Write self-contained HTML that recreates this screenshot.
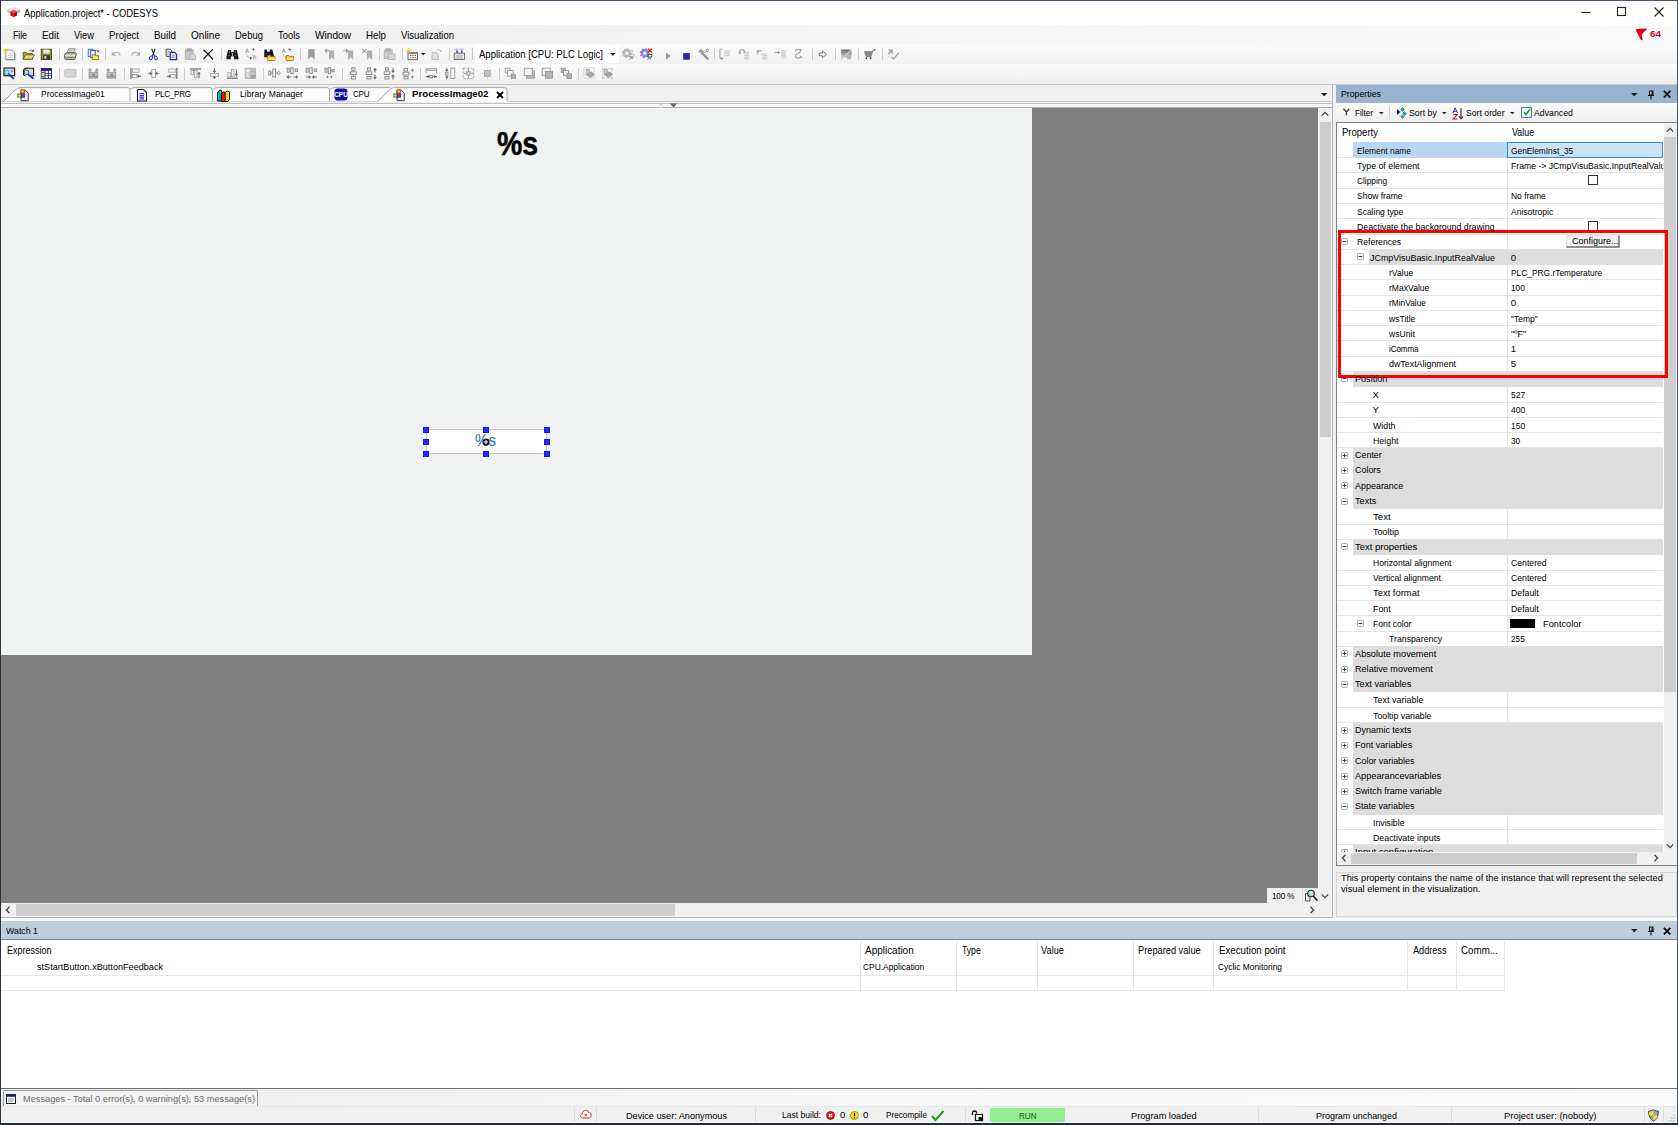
<!DOCTYPE html>
<html><head><meta charset="utf-8"><title>Application.project* - CODESYS</title>
<style>
html,body{margin:0;padding:0}
body{width:1678px;height:1125px;overflow:hidden;position:relative;background:#f0f0f0;font-family:"Liberation Sans",sans-serif;font-size:9.2px;color:#000}
div,span,svg{position:absolute;box-sizing:border-box}
.t{white-space:pre;display:block}
svg{overflow:visible}
</style></head><body>
<div style="left:0px;top:0px;width:1678px;height:25px;background:#ffffff;"></div>
<div style="left:0px;top:25px;width:1678px;height:19px;background:linear-gradient(to right,#efefef 0%,#f0f0f0 25%,#f7f7f7 60%,#fafafa 100%);"></div>
<div style="left:1px;top:44px;width:1677px;height:20px;background:linear-gradient(#fbfbfb,#f1f1f1);"></div>
<div style="left:1px;top:64px;width:1677px;height:20px;background:linear-gradient(#fcfcfc,#efefef);"></div>
<div style="left:1px;top:84px;width:1677px;height:1px;background:#c6c6c6;"></div>
<div style="left:1px;top:85px;width:1333px;height:17px;background:#f0f0f0;"></div>
<div style="left:1px;top:101px;width:1332px;height:1px;background:#c8c8c8;"></div>
<div style="left:1px;top:102px;width:1332px;height:1px;background:#efefef;"></div>
<div style="left:1px;top:103px;width:1332px;height:1px;background:#c0c0c0;"></div>
<div style="left:1px;top:104px;width:1330px;height:3px;background:#f9f9f9;"></div>
<div style="left:1px;top:107px;width:1332px;height:1px;background:#b0b0b0;"></div>
<div style="left:1px;top:108px;width:1317px;height:795px;background:#808080;"></div>
<div style="left:1px;top:108px;width:1031px;height:547px;background:#f0f1f1;"></div>
<div style="left:475px;top:45px;width:144px;height:18px;background:#ffffff;"></div>
<span class="t" style="left:496.6px;top:122.3px;font-size:33.5px;line-height:44px;font-weight:700;-webkit-text-stroke:0.5px #000;transform-origin:0 0;transform:scaleX(0.85)">%s</span>
<div style="left:426px;top:428.9px;width:121px;height:25.3px;background:#ffffff;border:1px solid #c4c4c4;"></div>
<span class="t" style="left:474.6px;top:430.6px;font-size:16.6px;line-height:20px;color:#1f6fb8;transform-origin:0 0;transform:scaleX(0.92)">%s</span>
<div style="left:422.8px;top:426.5px;width:6.4px;height:6.4px;background:#2a2aff;border:1px solid #1414e6;"></div>
<div style="left:422.8px;top:438.7px;width:6.4px;height:6.4px;background:#2a2aff;border:1px solid #1414e6;"></div>
<div style="left:422.8px;top:450.6px;width:6.4px;height:6.4px;background:#2a2aff;border:1px solid #1414e6;"></div>
<div style="left:483.1px;top:426.5px;width:6.4px;height:6.4px;background:#2a2aff;border:1px solid #1414e6;"></div>
<div style="left:483.1px;top:450.6px;width:6.4px;height:6.4px;background:#2a2aff;border:1px solid #1414e6;"></div>
<div style="left:543.5999999999999px;top:426.5px;width:6.4px;height:6.4px;background:#2a2aff;border:1px solid #1414e6;"></div>
<div style="left:543.5999999999999px;top:438.7px;width:6.4px;height:6.4px;background:#2a2aff;border:1px solid #1414e6;"></div>
<div style="left:543.5999999999999px;top:450.6px;width:6.4px;height:6.4px;background:#2a2aff;border:1px solid #1414e6;"></div>
<svg style="left:482.3px;top:437.9px" width="8" height="8" viewBox="0 0 8 8"><circle cx="4" cy="4" r="3.6" fill="#111"/><path d="M4 1.8V6.2M1.8 4H6.2" stroke="#fff" stroke-width="1.1"/></svg>
<div style="left:1318px;top:108px;width:14px;height:795px;background:#f0f0f0;"></div>
<div style="left:1320px;top:121.6px;width:11px;height:315px;background:#cdcdcd;"></div>
<div style="left:1px;top:902.7px;width:1317px;height:14px;background:#f0f0f0;"></div>
<div style="left:16px;top:904px;width:659px;height:11.5px;background:#cdcdcd;"></div>
<div style="left:1318px;top:902.7px;width:14px;height:14px;background:#f0f0f0;"></div>
<div style="left:1px;top:916.7px;width:1332px;height:1px;background:#b8b8b8;"></div>
<div style="left:1332px;top:85px;width:1px;height:832px;background:#b8b8b8;"></div>
<div style="left:1266.5px;top:887.5px;width:35.5px;height:15.2px;background:#f0f0f0;"></div>
<div style="left:1302px;top:887.5px;width:15.8px;height:15.2px;background:#f0f0f0;border-left:1px solid #dcdcdc;"></div>
<div style="left:1336px;top:85px;width:341px;height:18px;background:#99b4d1;"></div>
<div style="left:1336px;top:103px;width:341px;height:19px;background:linear-gradient(#fdfdfd,#eeeeee);"></div>
<div style="left:1389px;top:107px;width:1px;height:11.5px;background:#cfcfcf;"></div>
<div style="left:1336px;top:122px;width:341px;height:744px;background:#ffffff;border:1px solid #7f7f7f;"></div>
<div style="left:0;top:0;width:1678px;height:852px;overflow:hidden">
<div style="left:1337px;top:157.172px;width:325.79999999999995px;height:1px;background:#e4e4e4;"></div>
<div style="left:1506.5px;top:142.4px;width:1px;height:15.272px;background:#e4e4e4;"></div>
<div style="left:1353px;top:142.4px;width:154px;height:15.572000000000001px;background:#b9d7f3;"></div>
<div style="left:1507px;top:142.4px;width:155.79999999999995px;height:15.772px;background:#cbe3f8;border:1px solid #2f8be6;"></div>
<div style="left:1337px;top:172.444px;width:325.79999999999995px;height:1px;background:#e4e4e4;"></div>
<div style="left:1506.5px;top:157.672px;width:1px;height:15.272px;background:#e4e4e4;"></div>
<div style="left:1337px;top:187.716px;width:325.79999999999995px;height:1px;background:#e4e4e4;"></div>
<div style="left:1506.5px;top:172.94400000000002px;width:1px;height:15.272px;background:#e4e4e4;"></div>
<div style="left:1587.5px;top:175.394px;width:10px;height:10px;background:#fff;border:1px solid #333;"></div>
<div style="left:1337px;top:202.988px;width:325.79999999999995px;height:1px;background:#e4e4e4;"></div>
<div style="left:1506.5px;top:188.216px;width:1px;height:15.272px;background:#e4e4e4;"></div>
<div style="left:1337px;top:218.26px;width:325.79999999999995px;height:1px;background:#e4e4e4;"></div>
<div style="left:1506.5px;top:203.488px;width:1px;height:15.272px;background:#e4e4e4;"></div>
<div style="left:1337px;top:233.53199999999998px;width:325.79999999999995px;height:1px;background:#e4e4e4;"></div>
<div style="left:1506.5px;top:218.76px;width:1px;height:15.272px;background:#e4e4e4;"></div>
<div style="left:1587.5px;top:221.20999999999998px;width:10px;height:10px;background:#fff;border:1px solid #333;"></div>
<div style="left:1337px;top:248.804px;width:325.79999999999995px;height:1px;background:#e4e4e4;"></div>
<div style="left:1506.5px;top:234.032px;width:1px;height:15.272px;background:#e4e4e4;"></div>
<svg style="left:1341.10px;top:237.98px" width="7" height="7" viewBox="0 0 7 7"><rect x="0.5" y="0.5" width="6" height="6" rx="0.8" fill="#fbfbfb" stroke="#a3b4b8" stroke-width="1"/><path d="M1.7 3.5H5.3" stroke="#3a3a3a" stroke-width="1"/></svg>
<div style="left:1337px;top:264.076px;width:325.79999999999995px;height:1px;background:#e4e4e4;"></div>
<div style="left:1506.5px;top:249.304px;width:1px;height:15.272px;background:#e4e4e4;"></div>
<div style="left:1369px;top:249.704px;width:293.79999999999995px;height:15.272px;background:#dddddd;"></div>
<svg style="left:1357.00px;top:253.25px" width="7" height="7" viewBox="0 0 7 7"><rect x="0.5" y="0.5" width="6" height="6" rx="0.8" fill="#fbfbfb" stroke="#a3b4b8" stroke-width="1"/><path d="M1.7 3.5H5.3" stroke="#3a3a3a" stroke-width="1"/></svg>
<div style="left:1337px;top:279.348px;width:325.79999999999995px;height:1px;background:#e4e4e4;"></div>
<div style="left:1506.5px;top:264.576px;width:1px;height:15.272px;background:#e4e4e4;"></div>
<div style="left:1337px;top:294.62px;width:325.79999999999995px;height:1px;background:#e4e4e4;"></div>
<div style="left:1506.5px;top:279.848px;width:1px;height:15.272px;background:#e4e4e4;"></div>
<div style="left:1337px;top:309.892px;width:325.79999999999995px;height:1px;background:#e4e4e4;"></div>
<div style="left:1506.5px;top:295.12px;width:1px;height:15.272px;background:#e4e4e4;"></div>
<div style="left:1337px;top:325.164px;width:325.79999999999995px;height:1px;background:#e4e4e4;"></div>
<div style="left:1506.5px;top:310.392px;width:1px;height:15.272px;background:#e4e4e4;"></div>
<div style="left:1337px;top:340.436px;width:325.79999999999995px;height:1px;background:#e4e4e4;"></div>
<div style="left:1506.5px;top:325.664px;width:1px;height:15.272px;background:#e4e4e4;"></div>
<div style="left:1337px;top:355.708px;width:325.79999999999995px;height:1px;background:#e4e4e4;"></div>
<div style="left:1506.5px;top:340.93600000000004px;width:1px;height:15.272px;background:#e4e4e4;"></div>
<div style="left:1337px;top:370.97999999999996px;width:325.79999999999995px;height:1px;background:#e4e4e4;"></div>
<div style="left:1506.5px;top:356.20799999999997px;width:1px;height:15.272px;background:#e4e4e4;"></div>
<div style="left:1353px;top:371.48px;width:309.79999999999995px;height:15.572000000000001px;background:#dddddd;"></div>
<svg style="left:1341.20px;top:375.43px" width="7" height="7" viewBox="0 0 7 7"><rect x="0.5" y="0.5" width="6" height="6" rx="0.8" fill="#fbfbfb" stroke="#a3b4b8" stroke-width="1"/><path d="M1.7 3.5H5.3" stroke="#3a3a3a" stroke-width="1"/></svg>
<div style="left:1337px;top:401.524px;width:325.79999999999995px;height:1px;background:#e4e4e4;"></div>
<div style="left:1506.5px;top:386.752px;width:1px;height:15.272px;background:#e4e4e4;"></div>
<div style="left:1337px;top:416.796px;width:325.79999999999995px;height:1px;background:#e4e4e4;"></div>
<div style="left:1506.5px;top:402.024px;width:1px;height:15.272px;background:#e4e4e4;"></div>
<div style="left:1337px;top:432.06800000000004px;width:325.79999999999995px;height:1px;background:#e4e4e4;"></div>
<div style="left:1506.5px;top:417.29600000000005px;width:1px;height:15.272px;background:#e4e4e4;"></div>
<div style="left:1337px;top:447.34px;width:325.79999999999995px;height:1px;background:#e4e4e4;"></div>
<div style="left:1506.5px;top:432.568px;width:1px;height:15.272px;background:#e4e4e4;"></div>
<div style="left:1353px;top:447.84000000000003px;width:309.79999999999995px;height:15.572000000000001px;background:#dddddd;"></div>
<svg style="left:1341.20px;top:451.79px" width="7" height="7" viewBox="0 0 7 7"><rect x="0.5" y="0.5" width="6" height="6" rx="0.8" fill="#fbfbfb" stroke="#a3b4b8" stroke-width="1"/><path d="M1.7 3.5H5.3" stroke="#3a3a3a" stroke-width="1"/><path d="M3.5 1.7V5.3" stroke="#3a3a3a" stroke-width="1"/></svg>
<div style="left:1353px;top:463.11199999999997px;width:309.79999999999995px;height:15.572000000000001px;background:#dddddd;"></div>
<svg style="left:1341.20px;top:467.06px" width="7" height="7" viewBox="0 0 7 7"><rect x="0.5" y="0.5" width="6" height="6" rx="0.8" fill="#fbfbfb" stroke="#a3b4b8" stroke-width="1"/><path d="M1.7 3.5H5.3" stroke="#3a3a3a" stroke-width="1"/><path d="M3.5 1.7V5.3" stroke="#3a3a3a" stroke-width="1"/></svg>
<div style="left:1353px;top:478.384px;width:309.79999999999995px;height:15.572000000000001px;background:#dddddd;"></div>
<svg style="left:1341.20px;top:482.33px" width="7" height="7" viewBox="0 0 7 7"><rect x="0.5" y="0.5" width="6" height="6" rx="0.8" fill="#fbfbfb" stroke="#a3b4b8" stroke-width="1"/><path d="M1.7 3.5H5.3" stroke="#3a3a3a" stroke-width="1"/><path d="M3.5 1.7V5.3" stroke="#3a3a3a" stroke-width="1"/></svg>
<div style="left:1353px;top:493.65600000000006px;width:309.79999999999995px;height:15.572000000000001px;background:#dddddd;"></div>
<svg style="left:1341.20px;top:497.61px" width="7" height="7" viewBox="0 0 7 7"><rect x="0.5" y="0.5" width="6" height="6" rx="0.8" fill="#fbfbfb" stroke="#a3b4b8" stroke-width="1"/><path d="M1.7 3.5H5.3" stroke="#3a3a3a" stroke-width="1"/></svg>
<div style="left:1337px;top:523.7px;width:325.79999999999995px;height:1px;background:#e4e4e4;"></div>
<div style="left:1506.5px;top:508.928px;width:1px;height:15.272px;background:#e4e4e4;"></div>
<div style="left:1337px;top:538.9720000000001px;width:325.79999999999995px;height:1px;background:#e4e4e4;"></div>
<div style="left:1506.5px;top:524.2px;width:1px;height:15.272px;background:#e4e4e4;"></div>
<div style="left:1353px;top:539.472px;width:309.79999999999995px;height:15.572000000000001px;background:#dddddd;"></div>
<svg style="left:1341.20px;top:543.42px" width="7" height="7" viewBox="0 0 7 7"><rect x="0.5" y="0.5" width="6" height="6" rx="0.8" fill="#fbfbfb" stroke="#a3b4b8" stroke-width="1"/><path d="M1.7 3.5H5.3" stroke="#3a3a3a" stroke-width="1"/></svg>
<div style="left:1337px;top:569.5160000000001px;width:325.79999999999995px;height:1px;background:#e4e4e4;"></div>
<div style="left:1506.5px;top:554.744px;width:1px;height:15.272px;background:#e4e4e4;"></div>
<div style="left:1337px;top:584.788px;width:325.79999999999995px;height:1px;background:#e4e4e4;"></div>
<div style="left:1506.5px;top:570.016px;width:1px;height:15.272px;background:#e4e4e4;"></div>
<div style="left:1337px;top:600.0600000000001px;width:325.79999999999995px;height:1px;background:#e4e4e4;"></div>
<div style="left:1506.5px;top:585.288px;width:1px;height:15.272px;background:#e4e4e4;"></div>
<div style="left:1337px;top:615.3320000000001px;width:325.79999999999995px;height:1px;background:#e4e4e4;"></div>
<div style="left:1506.5px;top:600.5600000000001px;width:1px;height:15.272px;background:#e4e4e4;"></div>
<div style="left:1337px;top:630.604px;width:325.79999999999995px;height:1px;background:#e4e4e4;"></div>
<div style="left:1506.5px;top:615.832px;width:1px;height:15.272px;background:#e4e4e4;"></div>
<svg style="left:1357.00px;top:619.78px" width="7" height="7" viewBox="0 0 7 7"><rect x="0.5" y="0.5" width="6" height="6" rx="0.8" fill="#fbfbfb" stroke="#a3b4b8" stroke-width="1"/><path d="M1.7 3.5H5.3" stroke="#3a3a3a" stroke-width="1"/></svg>
<div style="left:1510px;top:619.082px;width:25px;height:9px;background:#000;"></div>
<div style="left:1337px;top:645.8760000000001px;width:325.79999999999995px;height:1px;background:#e4e4e4;"></div>
<div style="left:1506.5px;top:631.104px;width:1px;height:15.272px;background:#e4e4e4;"></div>
<div style="left:1353px;top:646.376px;width:309.79999999999995px;height:15.572000000000001px;background:#dddddd;"></div>
<svg style="left:1341.20px;top:650.33px" width="7" height="7" viewBox="0 0 7 7"><rect x="0.5" y="0.5" width="6" height="6" rx="0.8" fill="#fbfbfb" stroke="#a3b4b8" stroke-width="1"/><path d="M1.7 3.5H5.3" stroke="#3a3a3a" stroke-width="1"/><path d="M3.5 1.7V5.3" stroke="#3a3a3a" stroke-width="1"/></svg>
<div style="left:1353px;top:661.648px;width:309.79999999999995px;height:15.572000000000001px;background:#dddddd;"></div>
<svg style="left:1341.20px;top:665.60px" width="7" height="7" viewBox="0 0 7 7"><rect x="0.5" y="0.5" width="6" height="6" rx="0.8" fill="#fbfbfb" stroke="#a3b4b8" stroke-width="1"/><path d="M1.7 3.5H5.3" stroke="#3a3a3a" stroke-width="1"/><path d="M3.5 1.7V5.3" stroke="#3a3a3a" stroke-width="1"/></svg>
<div style="left:1353px;top:676.92px;width:309.79999999999995px;height:15.572000000000001px;background:#dddddd;"></div>
<svg style="left:1341.20px;top:680.87px" width="7" height="7" viewBox="0 0 7 7"><rect x="0.5" y="0.5" width="6" height="6" rx="0.8" fill="#fbfbfb" stroke="#a3b4b8" stroke-width="1"/><path d="M1.7 3.5H5.3" stroke="#3a3a3a" stroke-width="1"/></svg>
<div style="left:1337px;top:706.964px;width:325.79999999999995px;height:1px;background:#e4e4e4;"></div>
<div style="left:1506.5px;top:692.192px;width:1px;height:15.272px;background:#e4e4e4;"></div>
<div style="left:1337px;top:722.236px;width:325.79999999999995px;height:1px;background:#e4e4e4;"></div>
<div style="left:1506.5px;top:707.4639999999999px;width:1px;height:15.272px;background:#e4e4e4;"></div>
<div style="left:1353px;top:722.736px;width:309.79999999999995px;height:15.572000000000001px;background:#dddddd;"></div>
<svg style="left:1341.20px;top:726.69px" width="7" height="7" viewBox="0 0 7 7"><rect x="0.5" y="0.5" width="6" height="6" rx="0.8" fill="#fbfbfb" stroke="#a3b4b8" stroke-width="1"/><path d="M1.7 3.5H5.3" stroke="#3a3a3a" stroke-width="1"/><path d="M3.5 1.7V5.3" stroke="#3a3a3a" stroke-width="1"/></svg>
<div style="left:1353px;top:738.008px;width:309.79999999999995px;height:15.572000000000001px;background:#dddddd;"></div>
<svg style="left:1341.20px;top:741.96px" width="7" height="7" viewBox="0 0 7 7"><rect x="0.5" y="0.5" width="6" height="6" rx="0.8" fill="#fbfbfb" stroke="#a3b4b8" stroke-width="1"/><path d="M1.7 3.5H5.3" stroke="#3a3a3a" stroke-width="1"/><path d="M3.5 1.7V5.3" stroke="#3a3a3a" stroke-width="1"/></svg>
<div style="left:1353px;top:753.28px;width:309.79999999999995px;height:15.572000000000001px;background:#dddddd;"></div>
<svg style="left:1341.20px;top:757.23px" width="7" height="7" viewBox="0 0 7 7"><rect x="0.5" y="0.5" width="6" height="6" rx="0.8" fill="#fbfbfb" stroke="#a3b4b8" stroke-width="1"/><path d="M1.7 3.5H5.3" stroke="#3a3a3a" stroke-width="1"/><path d="M3.5 1.7V5.3" stroke="#3a3a3a" stroke-width="1"/></svg>
<div style="left:1353px;top:768.552px;width:309.79999999999995px;height:15.572000000000001px;background:#dddddd;"></div>
<svg style="left:1341.20px;top:772.50px" width="7" height="7" viewBox="0 0 7 7"><rect x="0.5" y="0.5" width="6" height="6" rx="0.8" fill="#fbfbfb" stroke="#a3b4b8" stroke-width="1"/><path d="M1.7 3.5H5.3" stroke="#3a3a3a" stroke-width="1"/><path d="M3.5 1.7V5.3" stroke="#3a3a3a" stroke-width="1"/></svg>
<div style="left:1353px;top:783.824px;width:309.79999999999995px;height:15.572000000000001px;background:#dddddd;"></div>
<svg style="left:1341.20px;top:787.77px" width="7" height="7" viewBox="0 0 7 7"><rect x="0.5" y="0.5" width="6" height="6" rx="0.8" fill="#fbfbfb" stroke="#a3b4b8" stroke-width="1"/><path d="M1.7 3.5H5.3" stroke="#3a3a3a" stroke-width="1"/><path d="M3.5 1.7V5.3" stroke="#3a3a3a" stroke-width="1"/></svg>
<div style="left:1353px;top:799.096px;width:309.79999999999995px;height:15.572000000000001px;background:#dddddd;"></div>
<svg style="left:1341.20px;top:803.05px" width="7" height="7" viewBox="0 0 7 7"><rect x="0.5" y="0.5" width="6" height="6" rx="0.8" fill="#fbfbfb" stroke="#a3b4b8" stroke-width="1"/><path d="M1.7 3.5H5.3" stroke="#3a3a3a" stroke-width="1"/></svg>
<div style="left:1337px;top:829.14px;width:325.79999999999995px;height:1px;background:#e4e4e4;"></div>
<div style="left:1506.5px;top:814.3679999999999px;width:1px;height:15.272px;background:#e4e4e4;"></div>
<div style="left:1337px;top:844.412px;width:325.79999999999995px;height:1px;background:#e4e4e4;"></div>
<div style="left:1506.5px;top:829.64px;width:1px;height:15.272px;background:#e4e4e4;"></div>
<div style="left:1353px;top:844.912px;width:309.79999999999995px;height:15.572000000000001px;background:#dddddd;"></div>
<svg style="left:1341.20px;top:848.86px" width="7" height="7" viewBox="0 0 7 7"><rect x="0.5" y="0.5" width="6" height="6" rx="0.8" fill="#fbfbfb" stroke="#a3b4b8" stroke-width="1"/><path d="M1.7 3.5H5.3" stroke="#3a3a3a" stroke-width="1"/><path d="M3.5 1.7V5.3" stroke="#3a3a3a" stroke-width="1"/></svg>
</div>
<div style="left:1565.8px;top:235.3px;width:53.2px;height:12px;background:#f1f1f1;border:1px solid #8c8c8c;border-left-color:#e3e3e3;border-top-color:#e3e3e3;box-shadow:0.6px 0.6px 0 #444;"></div>
<div style="left:1663.5px;top:123.3px;width:13.3px;height:728.7px;background:#f0f0f0;"></div>
<div style="left:1664px;top:137.3px;width:11.5px;height:555.2px;background:#cdcdcd;"></div>
<div style="left:1338px;top:852.2px;width:338.7px;height:12.8px;background:#f0f0f0;"></div>
<div style="left:1351.3px;top:853.2px;width:285.4px;height:11px;background:#cdcdcd;"></div>
<div style="left:1338px;top:229.8px;width:330px;height:148px;border:3.7px solid #fe0000;"></div>
<div style="left:1336px;top:872px;width:341px;height:44.7px;background:#f0f0f0;border:1px solid #d6d6d6;"></div>
<div style="left:1px;top:917.7px;width:1677px;height:4px;background:#fbfbfb;"></div>
<div style="left:1px;top:921px;width:1677px;height:18px;background:#bfcddb;"></div>
<div style="left:1px;top:938.8px;width:1677px;height:1px;background:#7a8a9c;"></div>
<div style="left:1px;top:939.8px;width:1677px;height:148px;background:#ffffff;"></div>
<div style="left:859.5px;top:941px;width:1px;height:49.5px;background:#e6e6e6;"></div>
<div style="left:955.8px;top:941px;width:1px;height:49.5px;background:#e6e6e6;"></div>
<div style="left:1036.5px;top:941px;width:1px;height:49.5px;background:#e6e6e6;"></div>
<div style="left:1132.5px;top:941px;width:1px;height:49.5px;background:#e6e6e6;"></div>
<div style="left:1213.3px;top:941px;width:1px;height:49.5px;background:#e6e6e6;"></div>
<div style="left:1407.0px;top:941px;width:1px;height:49.5px;background:#e6e6e6;"></div>
<div style="left:1455.5px;top:941px;width:1px;height:49.5px;background:#e6e6e6;"></div>
<div style="left:1503.5px;top:941px;width:1px;height:49.5px;background:#e6e6e6;"></div>
<div style="left:1px;top:974.8px;width:1503.5px;height:1px;background:#e6e6e6;"></div>
<div style="left:1px;top:990.2px;width:1503.5px;height:1px;background:#e6e6e6;"></div>
<div style="left:1px;top:1087.7px;width:1677px;height:1px;background:#6e6e6e;"></div>
<div style="left:1px;top:1088.7px;width:1677px;height:18px;background:linear-gradient(to right,#f0f0f0 0%,#f1f1f1 25%,#f8f8f8 60%,#fcfcfc 100%);"></div>
<div style="left:2.5px;top:1090px;width:255px;height:16.5px;background:#f3f3f3;border:1px solid #9a9a9a;border-radius:2px 2px 0 0;border-bottom-color:#c8c8c8;"></div>
<div style="left:1px;top:1106.5px;width:1677px;height:17.5px;background:#f0f0f0;"></div>
<div style="left:1px;top:1106.3px;width:1677px;height:1px;background:#e6e6e6;"></div>
<div style="left:990px;top:1108px;width:74.5px;height:15.5px;background:#90ee90;"></div>
<div style="left:574px;top:1108px;width:1px;height:15px;background:#dadada;"></div>
<div style="left:596px;top:1108px;width:1px;height:15px;background:#dadada;"></div>
<div style="left:755px;top:1108px;width:1px;height:15px;background:#dadada;"></div>
<div style="left:965px;top:1108px;width:1px;height:15px;background:#dadada;"></div>
<div style="left:1258px;top:1108px;width:1px;height:15px;background:#dadada;"></div>
<div style="left:1451px;top:1108px;width:1px;height:15px;background:#dadada;"></div>
<div style="left:1643.5px;top:1108px;width:1px;height:15px;background:#dadada;"></div>
<div style="left:1663px;top:1108px;width:1px;height:15px;background:#dadada;"></div>
<svg style="left:3.20px;top:47.60px" width="12.8" height="12.8" viewBox="0 0 16 16"><path d="M4 3h7.5l4 4v8.2h-11.5z" fill="#8a8a8a"/><path d="M3.5 2.500h7.500l3.500 3.500v8.500h-11z" fill="#fdfdfd" stroke="#777"/><path d="M6 7.500h6M6 9.500h6M6 11.500h6" stroke="#b9b9b9"/><path d="M3.2 0v6.4M0 3.2h6.4M1 1l4.4 4.4M5.4 1L1 5.4" stroke="#e8cf00" stroke-width=".9"/></svg>
<svg style="left:21.60px;top:47.60px" width="12.8" height="12.8" viewBox="0 0 16 16"><path d="M1.5 5.5h4l1.5 1.5h6v7h-11.5z" fill="#a9a23a" stroke="#55521c"/><path d="M1.5 14l2.8-5.5h11.2l-3 5.5z" fill="#e4dc6a" stroke="#55521c"/><path d="M8.5 4.2c1.5-2.2 3.8-2.2 5.2-0.4" fill="none" stroke="#444" stroke-width=".9"/><path d="M14.6 1.6v3h-3z" fill="#444"/></svg>
<svg style="left:40.10px;top:47.60px" width="12.8" height="12.8" viewBox="0 0 16 16"><rect x="1.5" y="1.5" width="13" height="13" fill="#8d8d2a" stroke="#3c3c10"/><rect x="4" y="2" width="8" height="5" fill="#e9e9e9"/><rect x="4" y="9" width="8.5" height="5.5" fill="#3a3a3a"/><rect x="5.5" y="10" width="2.5" height="3.5" fill="#d0d0d0"/></svg>
<svg style="left:63.60px;top:47.60px" width="12.8" height="12.8" viewBox="0 0 16 16"><path d="M3.500 6.500l2.500-5.500h8l-2.500 5.500z" fill="#f8f8f8" stroke="#555" stroke-width=".9"/><path d="M6.500 3h4.500M6 4.800h4.500" stroke="#888" stroke-width=".8"/><path d="M0.800 9c0-2 1.500-3 3-3h10.500c1 0 1.200 1 1 2l-1.300 5c-.3 1-1 1.500-2 1.500h-9c-1.500 0-2.200-1-2.200-2z" fill="#bdbdbd" stroke="#3c3c3c" stroke-width="1"/><path d="M1.500 9.500h12" stroke="#f4f4f4" stroke-width="1.200"/><path d="M2 12h11" stroke="#6a6a6a" stroke-width="1"/><rect x="7" y="9" width="3.500" height="1.300" fill="#e8dc00"/></svg>
<svg style="left:86.60px;top:47.60px" width="12.8" height="12.8" viewBox="0 0 16 16"><rect x="1.5" y="1.5" width="6" height="9" fill="#e8f0ff" stroke="#2b4fb0"/><rect x="4.5" y="3" width="6" height="9" fill="#dfe9ff" stroke="#2b4fb0"/><path d="M6.5 8.5h3l1 1h4v5h-8z" fill="#f3e25a" stroke="#7a6a10"/><path d="M9.5 3.5c2-1.6 4-1.2 4.6 1.4" fill="none" stroke="#444" stroke-width=".8"/><path d="M15.2 3.2l-1 2.6-1.7-1.8z" fill="#444"/></svg>
<svg style="left:110.10px;top:47.60px" width="12.8" height="12.8" viewBox="0 0 16 16"><path d="M12.200 9.500c1-3.500-4.500-6-8.200-2" fill="none" stroke="#b0b0b0" stroke-width="1.400"/><path d="M2.200 4.500v5.300h5.300z" fill="#b0b0b0"/></svg>
<svg style="left:128.90px;top:47.60px" width="12.8" height="12.8" viewBox="0 0 16 16"><path d="M3.800 9.500c-1-3.500 4.500-6 8.200-2" fill="none" stroke="#b0b0b0" stroke-width="1.400"/><path d="M13.800 4.500v5.300h-5.300z" fill="#b0b0b0"/></svg>
<svg style="left:146.60px;top:47.60px" width="12.8" height="12.8" viewBox="0 0 16 16"><path d="M5.800 1l3.400 8.800M10.200 1l-3.400 8.800" stroke="#222" stroke-width="1.300" fill="none"/><ellipse cx="5" cy="12.300" rx="1.700" ry="2.500" transform="rotate(35 5 12.300)" fill="none" stroke="#3a3ad0" stroke-width="1.300"/><ellipse cx="11" cy="12.300" rx="1.700" ry="2.500" transform="rotate(-35 11 12.300)" fill="none" stroke="#3a3ad0" stroke-width="1.300"/></svg>
<svg style="left:165.10px;top:47.60px" width="12.8" height="12.8" viewBox="0 0 16 16"><path d="M1.500 1.500h5l2 2v7h-7z" fill="#f0f0f0" stroke="#333" stroke-width="1.100"/><path d="M3 4h3.500M3 6h2.500M3 8h2.500" stroke="#888" stroke-width=".8"/><path d="M6.500 5.500h5.500l2.500 2.500v6.500h-8z" fill="#dcdcdc" stroke="#2b2bb4" stroke-width="1.500"/><path d="M8.500 9.500h4M8.500 11.500h4" stroke="#8a8a9a" stroke-width=".8"/></svg>
<svg style="left:183.90px;top:47.60px" width="12.8" height="12.8" viewBox="0 0 16 16"><rect x="1.5" y="2.5" width="10" height="11.5" fill="#c9c9c9" stroke="#a6a6a6"/><rect x="4" y="1" width="5" height="3" fill="#b0b0b0" stroke="#999"/><path d="M7.5 7.5h5l2 2v5h-7z" fill="#dedede" stroke="#a9a9a9"/><path d="M9 11h4M9 13h4" stroke="#b0b0b0" stroke-width=".7"/></svg>
<svg style="left:202.10px;top:47.60px" width="12.8" height="12.8" viewBox="0 0 16 16"><path d="M2.300 2.800c3.500 2.500 7 6 11 11.200M13.200 2c-3.600 3.400-7 6.800-10.800 11.400" stroke="#111" stroke-width="1.600" fill="none" stroke-linecap="round"/></svg>
<svg style="left:225.60px;top:47.60px" width="12.8" height="12.8" viewBox="0 0 16 16"><path d="M2.600 2.500h3.400l.5 2.500h3l.5-2.500h3.400l2 8.500v3h-5.400v-3.500h-4v3.500h-5.400v-3z" fill="#1a1a1a"/><path d="M4.300 3.500v3M11.700 3.500v3M3 9.500h2.500M10.500 9.500h2.500" stroke="#8a8a8a" stroke-width=".8"/><path d="M8 6v5" stroke="#f4f4f4" stroke-width=".9"/></svg>
<svg style="left:244.10px;top:47.60px" width="12.8" height="12.8" viewBox="0 0 16 16"><path d="M2 6l2-5 2 5M2.8 4.3h2.4" fill="none" stroke="#8a8a8a" stroke-width=".9"/><path d="M3.5 8c.2 3 2 4.6 4.6 4.6" fill="none" stroke="#8a8a8a" stroke-width="1" stroke-dasharray="1.2 1"/><path d="M7.6 10.8l2.6 1.8-2.6 1.8z" fill="#333"/><path d="M9.5 1.2c2 .2 3 1.6 3 3.6" fill="none" stroke="#8a8a8a" stroke-width="1" stroke-dasharray="1.2 1"/><path d="M11 .2l2.4 1.4-2.4 1.4z" fill="#333"/><path d="M11.5 9.5h2.2c1.2 0 1.2 2 0 2h-2.2zm0 2h2.5c1.3 0 1.3 2.5 0 2.5h-2.5z" fill="none" stroke="#aaa" stroke-width=".9"/></svg>
<svg style="left:262.90px;top:47.60px" width="12.8" height="12.8" viewBox="0 0 16 16"><path d="M1.8 2h3v2l1 .8h1.8l1-.8V2h3l2 7.5v2H9.2V8.6H7v2.9H1.5v-2z" fill="#1a1a1a"/><path d="M5.5 9.5h3l1 1h5.5v5h-9.5z" fill="#f6c04a" stroke="#8a6410"/><path d="M6 12h9v3H6z" fill="#ffd978"/></svg>
<svg style="left:281.40px;top:47.60px" width="12.8" height="12.8" viewBox="0 0 16 16"><path d="M1.5 6l2-5 2 5M2.3 4.3h2.4" fill="none" stroke="#8a8a8a" stroke-width=".9"/><path d="M3 8c.2 2.6 1.6 4 3.6 4.3" fill="none" stroke="#8a8a8a" stroke-width="1" stroke-dasharray="1.2 1"/><path d="M9 1.2c2 .2 3 1.6 3 3.6" fill="none" stroke="#8a8a8a" stroke-width="1" stroke-dasharray="1.2 1"/><path d="M10.5 .2l2.4 1.4-2.4 1.4z" fill="#333"/><path d="M6.5 9.5h3l1 1h5v5h-9z" fill="#f6c04a" stroke="#8a6410"/><path d="M7 12h8.5v3H7z" fill="#ffd978"/></svg>
<svg style="left:304.60px;top:47.60px" width="12.8" height="12.8" viewBox="0 0 16 16"><path d="M4 1.5h8v13l-4-3.6-4 3.6z" fill="#9a9a9a"/></svg>
<svg style="left:323.10px;top:47.60px" width="12.8" height="12.8" viewBox="0 0 16 16"><path d="M7.5 3h6.5v12l-3.2-3-3.3 3z" fill="#b0b0b0"/><path d="M8.5 3.5H2.8M5.2 1l-2.6 2.5 2.6 2.5" fill="none" stroke="#9a9a9a" stroke-width="1.3"/></svg>
<svg style="left:341.60px;top:47.60px" width="12.8" height="12.8" viewBox="0 0 16 16"><path d="M7.500 3h6.500v12l-3.200-3-3.300 3z" fill="#b0b0b0"/><path d="M1.500 3.500h6M5 1l2.600 2.500-2.600 2.500" fill="none" stroke="#9a9a9a" stroke-width="1.3"/></svg>
<svg style="left:360.60px;top:47.60px" width="12.8" height="12.8" viewBox="0 0 16 16"><path d="M7.500 3h6.500v12l-3.200-3-3.300 3z" fill="#b0b0b0"/><path d="M1.500 1l5.500 5.500M7 1l-5.500 5.500" fill="none" stroke="#9a9a9a" stroke-width="1.3"/></svg>
<svg style="left:383.30px;top:47.60px" width="12.8" height="12.8" viewBox="0 0 16 16"><rect x="1.500" y="2.500" width="10" height="10.500" fill="#cfcfcf" stroke="#ababab"/><rect x="4" y="1" width="5" height="3" fill="#b8b8b8" stroke="#a0a0a0"/><rect x="6.500" y="7.500" width="8.500" height="7" fill="#e2e2e2" stroke="#ababab"/><path d="M8 10h5.500M8 12.500h5.500" stroke="#b5b5b5" stroke-width=".8"/></svg>
<svg style="left:406.00px;top:47.60px" width="12.8" height="12.8" viewBox="0 0 16 16"><rect x="2.500" y="5.500" width="12" height="9" fill="#f4f4f4" stroke="#555"/><rect x="2.500" y="5.500" width="12" height="2.200" fill="#8a8a8a"/><path d="M5 9.500h1.500M8 9.500h1.500M11 9.500h1.500" stroke="#d02020" stroke-width="1.300"/><path d="M5 12h1.500M11 12h1.500" stroke="#2a9a2a" stroke-width="1.300"/><path d="M8 12h1.500" stroke="#2030d0" stroke-width="1.300"/><path d="M3.200 0v6.400M0 3.200h6.400M1 1l4.400 4.400M5.400 1L1 5.400" stroke="#e8cf00" stroke-width=".9"/></svg>
<svg style="left:430.10px;top:47.60px" width="12.8" height="12.8" viewBox="0 0 16 16"><path d="M2.500 5.500h6l2 2v7h-8z" fill="#dedede" stroke="#b5b5b5"/><path d="M8 3.200c2-1.800 4.400-1.200 5 1.200" fill="none" stroke="#b0b0b0" stroke-width=".9"/><path d="M14.400 2.600l-.8 2.800-2-1.600z" fill="#b0b0b0"/></svg>
<svg style="left:453.40px;top:47.60px" width="12.8" height="12.8" viewBox="0 0 16 16"><rect x="1.500" y="6.500" width="13" height="8" fill="#e9e9e9" stroke="#555"/><path d="M3 9h10M3 11h10M3 13h10" stroke="#aaa" stroke-width=".7"/><path d="M5.500 9v4M8 9v4M10.500 9v4" stroke="#aaa" stroke-width=".7"/><path d="M2 1.500h12" stroke="#3a49c8" stroke-width=".9" stroke-dasharray="1 1"/><path d="M5 2.500v3M11 2.500v3" stroke="#2030c0" stroke-width="1"/><path d="M3.300 4.300h3.400l-1.700 2.200zM9.300 4.300h3.400l-1.700 2.200z" fill="#2030c0"/></svg>
<svg style="left:622.10px;top:47.60px" width="12.8" height="12.8" viewBox="0 0 16 16"><circle cx="6" cy="6.500" r="3.600" fill="none" stroke="#b9b9b9" stroke-width="3"/><circle cx="6" cy="6.500" r="5.600" fill="none" stroke="#b9b9b9" stroke-width="1.400" stroke-dasharray="2 2.400"/><circle cx="12.300" cy="4" r="1.500" fill="#fff" stroke="#aaa" stroke-width=".9"/><rect x="10.200" y="8" width="4.600" height="3.200" fill="#fff" stroke="#aaa" stroke-width=".9"/><path d="M9 14.500l3.600-3.200M12.800 14v-2.900h-2.900" fill="none" stroke="#858585" stroke-width="1.200"/></svg>
<svg style="left:640.40px;top:47.60px" width="12.8" height="12.8" viewBox="0 0 16 16"><circle cx="6" cy="6.500" r="3.600" fill="none" stroke="#8488d8" stroke-width="3"/><circle cx="6" cy="6.500" r="5.600" fill="none" stroke="#7478c8" stroke-width="1.400" stroke-dasharray="2 2.400"/><path d="M10 .8l5 5M15 .8l-5 5" stroke="#e01010" stroke-width="1.700"/><rect x="10.200" y="8.300" width="4.600" height="3" fill="#fff" stroke="#222" stroke-width=".9"/><path d="M9 15l3.600-3.200M12.800 14.600v-2.900h-2.900" fill="none" stroke="#139a9a" stroke-width="1.100"/></svg>
<svg style="left:662.10px;top:47.60px" width="12.8" height="12.8" viewBox="0 0 16 16"><path d="M5 5.600l6 4.500-6 4.500z" fill="#9a9a9a"/></svg>
<svg style="left:679.60px;top:47.60px" width="12.8" height="12.8" viewBox="0 0 16 16"><rect x="4" y="6.300" width="8.300" height="8.300" fill="#28289a"/></svg>
<svg style="left:696.60px;top:47.60px" width="12.8" height="12.8" viewBox="0 0 16 16"><path d="M5.500 5.500l8 8" stroke="#9a9a9a" stroke-width="3" stroke-linecap="round"/><path d="M6.300 2.200c-2.600-1.300-5.400 1.300-4.200 4.100l2.300-2 1.900 1.600-1.900 2.300c2.700.9 5.100-1.800 4-4.200z" fill="#9a9a9a"/><circle cx="12.800" cy="3" r="1.600" fill="none" stroke="#858585" stroke-width="1.200"/><path d="M11.600 4.200l-2.200 2.200" stroke="#9a9a9a" stroke-width="1.200"/></svg>
<svg style="left:717.90px;top:47.60px" width="12.8" height="12.8" viewBox="0 0 16 16"><path d="M5.500 1.500h-3v11.500h3" fill="none" stroke="#9a9a9a" stroke-width="1.200"/><path d="M4 11.200l2.800 2-2.800 2z" fill="#9a9a9a"/><path d="M8 3.500h7M8 5.500h7M8 7.500h7M8 9.500h7" stroke="#c4c4c4" stroke-width="1.100"/></svg>
<svg style="left:736.60px;top:47.60px" width="12.8" height="12.8" viewBox="0 0 16 16"><path d="M3.500 6.500v-4h5.500v4" fill="none" stroke="#9a9a9a" stroke-width="1.200"/><path d="M1.500 5.500h4l-2 2.600z" fill="#9a9a9a"/><path d="M7.500 5.500h7.500M9 7.500h6M9 9.500h6M9 11.500h6M9 13.500h6" stroke="#c4c4c4" stroke-width="1.100"/></svg>
<svg style="left:755.40px;top:47.60px" width="12.8" height="12.8" viewBox="0 0 16 16"><path d="M3.500 8v-4.500h5" fill="none" stroke="#9a9a9a" stroke-width="1.200"/><path d="M1.500 5.200l2-2.800 2 2.800z" fill="#9a9a9a"/><path d="M7 7.500h8M9 9.500h6M9 11.500h6M9 13.500h6" stroke="#c4c4c4" stroke-width="1.100"/></svg>
<svg style="left:773.60px;top:47.60px" width="12.8" height="12.8" viewBox="0 0 16 16"><path d="M1 5.500h5" stroke="#9a9a9a" stroke-width="1.200"/><path d="M5 3.500l2.800 2-2.800 2z" fill="#9a9a9a"/><path d="M9 3.500h6M9 5.500h6M9 7.500h6M9 9.500h6M9 11.500h6" stroke="#c4c4c4" stroke-width="1.100"/></svg>
<svg style="left:791.90px;top:47.60px" width="12.8" height="12.8" viewBox="0 0 16 16"><path d="M4 4.500c0-4 7-4 6.500 0c-.5 3-6.500 2-6.500 5.500c0 3 5 3.500 7 1.500" fill="none" stroke="#9a9a9a" stroke-width="1.300"/><path d="M10.500 9.200l2.800 2.600-3.400 1z" fill="#9a9a9a"/><path d="M9.500 1l3 .5-1.800 2.300z" fill="#9a9a9a"/></svg>
<svg style="left:816.10px;top:47.60px" width="12.8" height="12.8" viewBox="0 0 16 16"><path d="M4 6.300h4.200v-2.600l4.600 4.300-4.600 4.300v-2.600h-4.200z" fill="#fff" stroke="#606060" stroke-width="1.100"/></svg>
<svg style="left:839.80px;top:47.60px" width="12.8" height="12.8" viewBox="0 0 16 16"><rect x="1.500" y="2" width="13" height="2.500" fill="#666"/><rect x="1.500" y="4.500" width="13" height="2.500" fill="#808080"/><rect x="1.500" y="7" width="13" height="2.500" fill="#9c9c9c"/><rect x="1.500" y="9.500" width="13" height="2.500" fill="#b4b4b4"/><path d="M1 14.500l14.500-13" stroke="#f4f4f4" stroke-width="1.600"/><path d="M1 14.500l14.500-13" stroke="#888" stroke-width=".7"/><path d="M9 12h1.500M11.500 12h1.500M9 13.500h5" stroke="#888" stroke-width=".9"/></svg>
<svg style="left:863.10px;top:47.60px" width="12.8" height="12.8" viewBox="0 0 16 16"><path d="M2 4.500h10l-1.500 5h-7z" fill="#8a8a8a" stroke="#6a6a6a" stroke-width=".8"/><path d="M12 4.500l1-2h2" fill="none" stroke="#444" stroke-width="1"/><circle cx="15" cy="2.300" r=".8" fill="#222"/><path d="M3.500 10.700h7" stroke="#666" stroke-width="1"/><rect x="3.400" y="11.600" width="1.800" height="2.200" fill="#333"/><rect x="8.400" y="11.600" width="1.800" height="2.200" fill="#333"/></svg>
<svg style="left:886.60px;top:47.60px" width="12.8" height="12.8" viewBox="0 0 16 16"><path d="M1.500 2.500h5v5M6.500 2.500l-5 5" fill="none" stroke="#9a9a9a" stroke-width="1.500"/><path d="M5.500 11l2.800 3 6.200-8" fill="none" stroke="#9a9a9a" stroke-width="1.500"/><path d="M1 9l3 3" stroke="#bbb" stroke-width="1"/></svg>
<div style="left:58.5px;top:48.3px;width:1px;height:11.4px;background:#cbcbcb;"></div>
<div style="left:81.5px;top:48.3px;width:1px;height:11.4px;background:#cbcbcb;"></div>
<div style="left:104.5px;top:48.3px;width:1px;height:11.4px;background:#cbcbcb;"></div>
<div style="left:220.5px;top:48.3px;width:1px;height:11.4px;background:#cbcbcb;"></div>
<div style="left:299.5px;top:48.3px;width:1px;height:11.4px;background:#cbcbcb;"></div>
<div style="left:378.5px;top:48.3px;width:1px;height:11.4px;background:#cbcbcb;"></div>
<div style="left:401.5px;top:48.3px;width:1px;height:11.4px;background:#cbcbcb;"></div>
<div style="left:448.5px;top:48.3px;width:1px;height:11.4px;background:#cbcbcb;"></div>
<div style="left:471.5px;top:48.3px;width:1px;height:11.4px;background:#cbcbcb;"></div>
<div style="left:713.5px;top:48.3px;width:1px;height:11.4px;background:#cbcbcb;"></div>
<div style="left:811.5px;top:48.3px;width:1px;height:11.4px;background:#cbcbcb;"></div>
<div style="left:834.5px;top:48.3px;width:1px;height:11.4px;background:#cbcbcb;"></div>
<div style="left:857.5px;top:48.3px;width:1px;height:11.4px;background:#cbcbcb;"></div>
<div style="left:881.5px;top:48.3px;width:1px;height:11.4px;background:#cbcbcb;"></div>
<svg style="left:420.80px;top:53.20px" width="4.4" height="2.2" viewBox="0 0 10 5"><path d="M0 0h10l-5 5z" fill="#111"/></svg>
<svg style="left:610.20px;top:52.90px" width="5.6" height="2.8" viewBox="0 0 10 5"><path d="M0 0h10l-5 5z" fill="#111"/></svg>
<svg style="left:3.10px;top:67.40px" width="12.8" height="12.8" viewBox="0 0 16 16"><rect x="1.2" y="1.3" width="13.4" height="9.600" fill="#e4e8ea" stroke="#151515" stroke-width="1.400"/><path d="M9.500 3.500h3.500v3h-3.500z" fill="#9a9a9a"/><circle cx="4.900" cy="6.600" r="2.900" fill="#7ff0f8" stroke="#2a7aa0" stroke-width=".8"/><path d="M7.400 9.300l5.400 4.800" stroke="#1b3bd0" stroke-width="2.300" stroke-linecap="round"/></svg>
<svg style="left:21.60px;top:67.40px" width="12.8" height="12.8" viewBox="0 0 16 16"><path d="M2 3.500l2.500-2h10v9.500h-3" fill="#d4d8da" stroke="#151515" stroke-width="1.400"/><path d="M2 3.500v6.500l2 1" fill="none" stroke="#151515" stroke-width="1.400"/><circle cx="5.600" cy="6.600" r="2.900" fill="#7ff0f8" stroke="#222" stroke-width=".9"/><path d="M8 9.300l5.600 4.800" stroke="#1b3bd0" stroke-width="2.300" stroke-linecap="round"/></svg>
<svg style="left:40.10px;top:67.40px" width="12.8" height="12.8" viewBox="0 0 16 16"><rect x="1.500" y="2" width="13" height="12.500" fill="#fff" stroke="#15157a" stroke-width="1"/><rect x="1.500" y="2" width="13" height="2.800" fill="#15157a"/><rect x="2.500" y="5.800" width="3" height="2" fill="#e02020"/><rect x="2.500" y="8.400" width="3" height="2" fill="#f0d000"/><rect x="2.500" y="11" width="3" height="2.200" fill="#20a020"/><path d="M6.300 5v9.500M10.500 5v9.500M6 8.100h8.500M6 10.800h8.500" stroke="#15157a" stroke-width="1"/></svg>
<svg style="left:63.60px;top:67.40px" width="12.8" height="12.8" viewBox="0 0 16 16"><rect x="1" y="3" width="14" height="9.500" rx="1" fill="#d4d4d4" stroke="#bcbcbc" stroke-width="1.200"/></svg>
<svg style="left:86.60px;top:67.40px" width="12.8" height="12.8" viewBox="0 0 16 16"><path d="M2 2v4h4v-2h4v2h4v-4h-3v2h-5.500v-2z" fill="#a2a2a2"/><rect x="2.500" y="7" width="11" height="7" fill="#bdbdbd" stroke="#9a9a9a"/><rect x="6.500" y="8.500" width="3.500" height="3" fill="#8e8e8e"/><path d="M2.500 12h11" stroke="#8e8e8e" stroke-width="1.600"/></svg>
<svg style="left:105.10px;top:67.40px" width="12.8" height="12.8" viewBox="0 0 16 16"><path d="M2 2v4h4v-2h4v2h4v-4h-3v2h-5.500v-2z" fill="#a2a2a2"/><rect x="2.500" y="7" width="11" height="7" fill="#bdbdbd" stroke="#9a9a9a"/><rect x="6.500" y="8.500" width="3.500" height="3" fill="#8e8e8e"/><path d="M2.500 12h11" stroke="#8e8e8e" stroke-width="1.600"/></svg>
<svg style="left:128.60px;top:67.40px" width="12.8" height="12.8" viewBox="0 0 16 16"><path d="M2.500 1v14" stroke="#7c7c7c" stroke-width="1.700"/><rect x="4.500" y="2.500" width="8" height="4" fill="#f4f4f4" stroke="#9a9a9a"/><rect x="4.500" y="9.500" width="5.500" height="4" fill="#f4f4f4" stroke="#9a9a9a"/><path d="M15 11.500h-4M12.500 10l-1.800 1.500 1.800 1.500" fill="none" stroke="#6c6c6c" stroke-width="1.350"/></svg>
<svg style="left:147.10px;top:67.40px" width="12.8" height="12.8" viewBox="0 0 16 16"><rect x="6" y="3" width="4.500" height="10" fill="#f4f4f4" stroke="#9a9a9a"/><path d="M1 8h4M11.500 8h4" stroke="#858585" stroke-width="1.200"/><path d="M3.500 6.200l2 1.800-2 1.800M13 6.200l-2 1.800 2 1.800" fill="none" stroke="#6c6c6c" stroke-width="1.350"/></svg>
<svg style="left:165.60px;top:67.40px" width="12.8" height="12.8" viewBox="0 0 16 16"><path d="M13.500 1v14" stroke="#7c7c7c" stroke-width="1.700"/><rect x="3.500" y="2.500" width="8" height="4" fill="#f4f4f4" stroke="#9a9a9a"/><rect x="6" y="9.500" width="5.500" height="4" fill="#f4f4f4" stroke="#9a9a9a"/><path d="M1 11.500h4M3.500 10l1.800 1.500-1.800 1.500" fill="none" stroke="#6c6c6c" stroke-width="1.350"/></svg>
<svg style="left:188.60px;top:67.40px" width="12.8" height="12.8" viewBox="0 0 16 16"><path d="M1 2.500h14" stroke="#7c7c7c" stroke-width="1.700"/><rect x="2.500" y="4.500" width="3" height="5" fill="#f4f4f4" stroke="#9a9a9a"/><rect x="7" y="4.500" width="3" height="9" fill="#f4f4f4" stroke="#9a9a9a"/><path d="M12.500 14v-7M11 9l1.500-2 1.500 2" fill="none" stroke="#6c6c6c" stroke-width="1.350"/></svg>
<svg style="left:207.60px;top:67.40px" width="12.8" height="12.8" viewBox="0 0 16 16"><rect x="3" y="8" width="10" height="3.500" fill="#f4f4f4" stroke="#9a9a9a"/><path d="M8 1.500v5M6.200 4.800l1.800 1.800 1.800-1.800M8 15v-3M6.500 13.500l1.500-1.500 1.500 1.500" fill="none" stroke="#6c6c6c" stroke-width="1.350"/></svg>
<svg style="left:225.60px;top:67.40px" width="12.8" height="12.8" viewBox="0 0 16 16"><path d="M1 14h14" stroke="#7c7c7c" stroke-width="1.700"/><rect x="2.500" y="7" width="3" height="5.500" fill="#f4f4f4" stroke="#9a9a9a"/><rect x="7" y="3" width="3" height="9.500" fill="#f4f4f4" stroke="#9a9a9a"/><path d="M13 3v8M11.500 9l1.500 2 1.500-2" fill="none" stroke="#6c6c6c" stroke-width="1.350"/></svg>
<svg style="left:243.90px;top:67.40px" width="12.8" height="12.8" viewBox="0 0 16 16"><rect x="1.500" y="1.500" width="13" height="13" fill="#cfcfcf" stroke="#adadad"/><rect x="3" y="3" width="4" height="3" fill="#ededed"/><rect x="8.500" y="3" width="5" height="4" fill="#b6b6b6"/><rect x="8" y="9.500" width="6" height="4.500" fill="#a2a2a2"/><path d="M3 9h3M3 11h4" stroke="#eee" stroke-width="1"/></svg>
<svg style="left:267.60px;top:67.40px" width="12.8" height="12.8" viewBox="0 0 16 16"><rect x="1" y="5" width="2.500" height="5" fill="#f4f4f4" stroke="#858585" stroke-width="1.150"/><rect x="6" y="2.500" width="3.500" height="10" fill="#f4f4f4" stroke="#858585" stroke-width="1.150"/><circle cx="13.300" cy="7.500" r="1.800" fill="#f4f4f4" stroke="#858585" stroke-width="1.150"/><path d="M3.500 7.500h2.500M9.500 7.500h2" stroke="#858585" stroke-width="1.150"/></svg>
<svg style="left:286.00px;top:67.40px" width="12.8" height="12.8" viewBox="0 0 16 16"><rect x="1.500" y="1.500" width="2.500" height="5" fill="#f4f4f4" stroke="#858585" stroke-width="1.150"/><rect x="6" y="1" width="3" height="7" fill="#f4f4f4" stroke="#858585" stroke-width="1.150"/><rect x="11.500" y="2.500" width="3" height="3" fill="#f4f4f4" stroke="#858585" stroke-width="1.150"/><path d="M1.500 12.500h5M9.500 12.500h5M3.500 10.800l-2 1.700 2 1.700M12.500 10.800l2 1.700-2 1.700" fill="none" stroke="#6c6c6c" stroke-width="1.350"/></svg>
<svg style="left:304.80px;top:67.40px" width="12.8" height="12.8" viewBox="0 0 16 16"><rect x="1.500" y="1.500" width="2.500" height="5" fill="#f4f4f4" stroke="#858585" stroke-width="1.150"/><rect x="6" y="1" width="3" height="7" fill="#f4f4f4" stroke="#858585" stroke-width="1.150"/><rect x="11.500" y="2.500" width="3" height="3" fill="#f4f4f4" stroke="#858585" stroke-width="1.150"/><path d="M1 12.500h5.500M9.500 12.500h5.500M4.500 10.800l2 1.700-2 1.700M11.500 10.800l-2 1.700 2 1.700" fill="none" stroke="#6c6c6c" stroke-width="1.350"/></svg>
<svg style="left:322.80px;top:67.40px" width="12.8" height="12.8" viewBox="0 0 16 16"><rect x="2.500" y="1.500" width="2.500" height="5" fill="#f4f4f4" stroke="#858585" stroke-width="1.150"/><rect x="6.500" y="1" width="3" height="7" fill="#f4f4f4" stroke="#858585" stroke-width="1.150"/><path d="M9.500 4.500h2" stroke="#858585" stroke-width="1.150"/><rect x="11.500" y="3" width="2.500" height="3" fill="#f4f4f4" stroke="#858585" stroke-width="1.150"/><path d="M4 12.500h3M9 12.500h3M5.500 11v3M10.500 11v3" fill="none" stroke="#858585" stroke-width="1.200"/></svg>
<svg style="left:346.60px;top:67.40px" width="12.8" height="12.8" viewBox="0 0 16 16"><rect x="6" y="1" width="4" height="3" fill="#f4f4f4" stroke="#858585" stroke-width="1.150"/><rect x="4.500" y="6" width="7" height="3.500" fill="#f4f4f4" stroke="#858585" stroke-width="1.150"/><rect x="5.500" y="12" width="5" height="3" fill="#f4f4f4" stroke="#858585" stroke-width="1.150"/><path d="M8 4v2M8 9.500v2.500" stroke="#858585" stroke-width="1.150"/></svg>
<svg style="left:365.10px;top:67.40px" width="12.8" height="12.8" viewBox="0 0 16 16"><rect x="3" y="1" width="4" height="3" fill="#f4f4f4" stroke="#858585" stroke-width="1.150"/><rect x="1.500" y="6" width="7" height="3.500" fill="#f4f4f4" stroke="#858585" stroke-width="1.150"/><rect x="2.500" y="12" width="5" height="3" fill="#f4f4f4" stroke="#858585" stroke-width="1.150"/><path d="M12.500 2v5M12.500 9.500v5M10.800 4l1.700-2 1.700 2M10.800 12.500l1.700 2 1.700-2" fill="none" stroke="#6c6c6c" stroke-width="1.350"/></svg>
<svg style="left:383.40px;top:67.40px" width="12.8" height="12.8" viewBox="0 0 16 16"><rect x="3" y="1" width="4" height="3" fill="#f4f4f4" stroke="#858585" stroke-width="1.150"/><rect x="1.500" y="6" width="7" height="3.500" fill="#f4f4f4" stroke="#858585" stroke-width="1.150"/><rect x="2.500" y="12" width="5" height="3" fill="#f4f4f4" stroke="#858585" stroke-width="1.150"/><path d="M12.500 1v5.500M12.500 10v5.500M10.800 4.500l1.700 2 1.700-2M10.800 12l1.700-2 1.700 2" fill="none" stroke="#6c6c6c" stroke-width="1.350"/></svg>
<svg style="left:401.80px;top:67.40px" width="12.8" height="12.8" viewBox="0 0 16 16"><rect x="2.500" y="2" width="4.500" height="3" fill="#f4f4f4" stroke="#858585" stroke-width="1.150"/><rect x="1.500" y="6.500" width="7" height="3.500" fill="#f4f4f4" stroke="#858585" stroke-width="1.150"/><rect x="2.500" y="12" width="5" height="3" fill="#f4f4f4" stroke="#858585" stroke-width="1.150"/><path d="M11 4h4M13 2v4M11 12.500h4M13 10.500v4" fill="none" stroke="#858585" stroke-width="1.200"/></svg>
<svg style="left:425.40px;top:67.40px" width="12.8" height="12.8" viewBox="0 0 16 16"><path d="M1.500 8v-6h13v6" fill="none" stroke="#9a9a9a" stroke-width="1.100"/><path d="M1.500 4h13" stroke="#858585" stroke-width="1.200"/><rect x="6" y="10.500" width="3.500" height="3" fill="#f4f4f4" stroke="#858585" stroke-width="1.150"/><path d="M1 12h4M11 12h4M3.500 10.500l1.600 1.500-1.600 1.500M12.500 10.500l-1.600 1.500 1.600 1.500" fill="none" stroke="#6c6c6c" stroke-width="1.350"/></svg>
<svg style="left:443.90px;top:67.40px" width="12.8" height="12.8" viewBox="0 0 16 16"><rect x="8.500" y="1.500" width="5" height="13" fill="#f4f4f4" stroke="#9a9a9a" stroke-width="1.100"/><rect x="2" y="6.500" width="3" height="3.500" fill="#f4f4f4" stroke="#858585" stroke-width="1.150"/><path d="M3.500 1v4M3.500 11.500v4M2 3.500l1.500 1.600 1.500-1.600M2 13l1.500-1.600 1.500 1.600" fill="none" stroke="#6c6c6c" stroke-width="1.350"/></svg>
<svg style="left:461.90px;top:67.40px" width="12.8" height="12.8" viewBox="0 0 16 16"><rect x="1.500" y="1.500" width="13" height="13" fill="none" stroke="#9a9a9a" stroke-width="1.100" stroke-dasharray="3 1.500"/><rect x="6" y="6" width="4" height="4" fill="#f4f4f4" stroke="#858585" stroke-width="1.150"/><path d="M8 2.500v2.500M8 11v2.500M2.500 8h2.500M11 8h2.500" stroke="#858585" stroke-width="1.150"/></svg>
<svg style="left:480.60px;top:67.40px" width="12.8" height="12.8" viewBox="0 0 16 16"><rect x="4.500" y="4.500" width="7" height="7" fill="#bdbdbd" stroke="#a0a0a0"/><path d="M8 1v2.500M8 12.500v2.500M1 8h2.500M12.500 8h2.500M3 3l1.300 1.300M13 3l-1.300 1.300M3 13l1.300-1.300M13 13l-1.300-1.300" stroke="#b0b0b0" stroke-width=".9" stroke-dasharray="1 .8"/></svg>
<svg style="left:503.60px;top:67.40px" width="12.8" height="12.8" viewBox="0 0 16 16"><rect x="1.500" y="1.500" width="6" height="6" fill="#e6e6e6" stroke="#909090"/><rect x="4.500" y="4.500" width="7" height="7" fill="#f6f6f6" stroke="#909090"/><rect x="9" y="9" width="5.500" height="5.500" fill="#b0b0b0" stroke="#909090"/></svg>
<svg style="left:522.60px;top:67.40px" width="12.8" height="12.8" viewBox="0 0 16 16"><rect x="4.500" y="5" width="10" height="9" fill="#b8b8b8" stroke="#9a9a9a"/><rect x="1.500" y="1.500" width="10" height="9" fill="#f4f4f4" stroke="#909090"/></svg>
<svg style="left:541.10px;top:67.40px" width="12.8" height="12.8" viewBox="0 0 16 16"><rect x="1.500" y="1.500" width="10" height="9" fill="#f4f4f4" stroke="#909090"/><rect x="5.500" y="5.500" width="9" height="8.500" fill="#b4b4b4" stroke="#909090"/></svg>
<svg style="left:559.60px;top:67.40px" width="12.8" height="12.8" viewBox="0 0 16 16"><rect x="1.500" y="1.500" width="5.500" height="5.500" fill="#b8b8b8" stroke="#909090"/><rect x="4.500" y="4.500" width="6" height="6" fill="#f6f6f6" stroke="#909090"/><rect x="8.500" y="8.500" width="6" height="6" fill="#b0b0b0" stroke="#909090"/></svg>
<svg style="left:583.20px;top:67.40px" width="12.8" height="12.8" viewBox="0 0 16 16"><rect x="1" y="1" width="13" height="13" fill="none" stroke="#b0b0b0" stroke-width=".9" stroke-dasharray="1.200 1"/><path d="M4 3h4v7h-4z" fill="#c9c9c9" stroke="#9c9c9c"/><path d="M6 8l5-2 3 3.500-4.500 3.500-3.500-2z" fill="#a6a6a6" stroke="#909090" stroke-width=".8"/></svg>
<svg style="left:601.20px;top:67.40px" width="12.8" height="12.8" viewBox="0 0 16 16"><path d="M1 1l3 3M15 1l-3 3M1 15l3-3M15 15l-3-3" stroke="#b0b0b0" stroke-width=".9"/><rect x="2" y="2" width="12" height="12" fill="none" stroke="#b0b0b0" stroke-width=".9" stroke-dasharray="1.200 1"/><path d="M4 3h4v7h-4z" fill="#c9c9c9" stroke="#9c9c9c"/><path d="M6 8l5-2 3 3.500-4.500 3.500-3.500-2z" fill="#a6a6a6" stroke="#909090" stroke-width=".8"/></svg>
<div style="left:58.5px;top:68.3px;width:1px;height:11.4px;background:#cbcbcb;"></div>
<div style="left:81.5px;top:68.3px;width:1px;height:11.4px;background:#cbcbcb;"></div>
<div style="left:123.5px;top:68.3px;width:1px;height:11.4px;background:#cbcbcb;"></div>
<div style="left:183.5px;top:68.3px;width:1px;height:11.4px;background:#cbcbcb;"></div>
<div style="left:262.9px;top:68.3px;width:1px;height:11.4px;background:#cbcbcb;"></div>
<div style="left:341.5px;top:68.3px;width:1px;height:11.4px;background:#cbcbcb;"></div>
<div style="left:420.1px;top:68.3px;width:1px;height:11.4px;background:#cbcbcb;"></div>
<div style="left:498.9px;top:68.3px;width:1px;height:11.4px;background:#cbcbcb;"></div>
<div style="left:577.5px;top:68.3px;width:1px;height:11.4px;background:#cbcbcb;"></div>
<svg style="left:7px;top:6px" width="14" height="12" viewBox="0 0 14 12"><path d="M0.2 3.5L6.5 0.9L13 3.5L6.5 6.5Z" fill="#e0e3e3"/><path d="M0.2 3.5L6.5 6.5L6.5 9L0.2 6Z" fill="#b9bdbd"/><path d="M13 3.5L6.5 6.5L6.5 9L13 6Z" fill="#a6aaaa"/><path d="M3.4 5.600L6.700 3.800L10 5.600L6.700 7.500Z" fill="#ff4040"/><path d="M3.400 5.600L6.700 7.500L6.700 11.300L3.400 9.400Z" fill="#e3000f"/><path d="M10 5.600L6.700 7.500L6.700 11.300L10 9.400Z" fill="#b8000c"/></svg>
<svg style="left:1579.2px;top:5.2px" width="90" height="14" viewBox="0 0 90 14"><path d="M2 7.500h9.500" stroke="#222" stroke-width="1"/><rect x="38.500" y="2.500" width="8" height="8" fill="none" stroke="#222" stroke-width="1.100"/><path d="M75.500 2.500l9 9M84.500 2.500l-9 9" stroke="#222" stroke-width="1.100"/></svg>
<svg style="left:1634.5px;top:27.5px" width="13" height="13" viewBox="0 0 13 13"><path d="M0.500 1.500c3.500-.8 8-1.200 12-.6c-2.800 2.200-5 4.200-5.800 6.200l1 5.400c-1.600-.4-2.200-.8-2.400-1.400z" fill="#e2001a"/></svg>
<svg style="left:0;top:0" width="1340" height="104" viewBox="0 0 1340 104"><path d="M318 101.2L329.5 90.0Q331.5 87.6 334.5 87.6L389.5 87.6Q392 87.6 392 90.1L392 101.2" fill="#fbfbfb" stroke="#a6a6a6" stroke-width="1"/></svg>
<svg style="left:0;top:0" width="1340" height="104" viewBox="0 0 1340 104"><path d="M201 101.2L212.5 90.0Q214.5 87.6 217.5 87.6L327.0 87.6Q329.5 87.6 329.5 90.1L329.5 101.2" fill="#fbfbfb" stroke="#a6a6a6" stroke-width="1"/></svg>
<svg style="left:0;top:0" width="1340" height="104" viewBox="0 0 1340 104"><path d="M118 101.2L129.5 90.0Q131.5 87.6 134.5 87.6L210.0 87.6Q212.5 87.6 212.5 90.1L212.5 101.2" fill="#fbfbfb" stroke="#a6a6a6" stroke-width="1"/></svg>
<svg style="left:0;top:0" width="1340" height="104" viewBox="0 0 1340 104"><path d="M3.7 101.2L15.2 90.0Q17.2 87.6 20.2 87.6L127.5 87.6Q130 87.6 130 90.1L130 101.2" fill="#fbfbfb" stroke="#a6a6a6" stroke-width="1"/></svg>
<svg style="left:0;top:0" width="1340" height="104" viewBox="0 0 1340 104"><path d="M378 101.2L389.5 90.0Q391.5 87.6 394.5 87.6L504.5 87.6Q507 87.6 507 90.1L507 101.2" fill="#ffffff" stroke="#a6a6a6" stroke-width="1"/></svg>
<div style="left:379px;top:100.6px;width:127.5px;height:1.6px;background:#ffffff;"></div>
<svg style="left:16.5px;top:89.0px" width="12.6" height="12.6" viewBox="0 0 14 14"><path d="M4.500 1.500h5l3 3v8.500h-8z" fill="#f2f2f2" stroke="#222" stroke-width="1"/><rect x="4.500" y="1" width="3.600" height="3.600" fill="#f3e800" stroke="#d01010" stroke-width="1"/><rect x="1" y="5.500" width="3.600" height="3.600" fill="#f3e800" stroke="#18a018" stroke-width="1.100"/><rect x="4.800" y="5.500" width="3.400" height="3.600" fill="#e0207a" stroke="#2020c0" stroke-width="1"/></svg>
<svg style="left:393.0px;top:89.0px" width="12.6" height="12.6" viewBox="0 0 14 14"><path d="M4.500 1.500h5l3 3v8.500h-8z" fill="#f2f2f2" stroke="#222" stroke-width="1"/><rect x="4.500" y="1" width="3.600" height="3.600" fill="#f3e800" stroke="#d01010" stroke-width="1"/><rect x="1" y="5.500" width="3.600" height="3.600" fill="#f3e800" stroke="#18a018" stroke-width="1.100"/><rect x="4.800" y="5.500" width="3.400" height="3.600" fill="#e0207a" stroke="#2020c0" stroke-width="1"/></svg>
<svg style="left:135.5px;top:87.5px" width="12" height="14" viewBox="0 0 12 14"><path d="M1.500 1.500h6l3 3v8.500h-9z" fill="#f7f7ff" stroke="#222" stroke-width="1.100"/><path d="M3.500 5.500h4.500M3.500 7.300h4.500M3.500 9.100h4.500M3.500 10.900h4.500" stroke="#3a3ae8" stroke-width="1.200"/></svg>
<svg style="left:216px;top:87.5px" width="14.5" height="14.5" viewBox="0 0 15 15"><path d="M1.500 5l2.500-3 2 1v10.500h-4.500z" fill="#18b8b8" stroke="#111" stroke-width="1"/><path d="M5.500 5.500l2.500-1.500 2 1v9h-4.500z" fill="#e81818" stroke="#111" stroke-width="1"/><path d="M9.500 4.500l2.500-1.500 2 1v8l-2 2h-2.500z" fill="#e8e000" stroke="#111" stroke-width="1"/></svg>
<svg style="left:333.5px;top:87.5px" width="14" height="13" viewBox="0 0 14 13"><rect x="0.500" y="0.500" width="13" height="12" rx="3" fill="#10109a"/><text x="7" y="9" font-family="Liberation Sans" font-size="6.500" font-weight="700" fill="#fff" text-anchor="middle">CPU</text></svg>
<svg style="left:495.5px;top:90.5px" width="8" height="8" viewBox="0 0 8 8"><path d="M1 1l6 6M7 1l-6 6" stroke="#000" stroke-width="1.800"/></svg>
<svg style="left:1321.30px;top:92.70px" width="6.4" height="3.2" viewBox="0 0 10 5"><path d="M0 0h10l-5 5z" fill="#111"/></svg>
<svg style="left:658px;top:103px" width="22" height="5" viewBox="0 0 22 5"><path d="M0.500 4.500l2.500-3.500 2.500 3.500z" fill="#fff" stroke="#bbb" stroke-width=".7"/><path d="M12 0.500h7l-3.500 4z" fill="#666"/></svg>
<svg style="left:1325px;top:113.5px" width="1" height="1"><path d="M-3.2 1.6L0 -1.6L3.2 1.6" fill="none" stroke="#444" stroke-width="1.300"/></svg>
<svg style="left:1325px;top:896px" width="1" height="1"><path d="M-3.2 -1.6L0 1.6L3.2 -1.6" fill="none" stroke="#444" stroke-width="1.300"/></svg>
<svg style="left:8px;top:910px" width="1" height="1"><path d="M1.6 -3.2L-1.6 0L1.6 3.2" fill="none" stroke="#444" stroke-width="1.300"/></svg>
<svg style="left:1311.5px;top:910px" width="1" height="1"><path d="M-1.6 -3.2L1.6 0L-1.6 3.2" fill="none" stroke="#444" stroke-width="1.300"/></svg>
<svg style="left:1669.7px;top:130.3px" width="1" height="1"><path d="M-3.2 1.6L0 -1.6L3.2 1.6" fill="none" stroke="#444" stroke-width="1.300"/></svg>
<svg style="left:1669.7px;top:845.5px" width="1" height="1"><path d="M-3.2 -1.6L0 1.6L3.2 -1.6" fill="none" stroke="#444" stroke-width="1.300"/></svg>
<svg style="left:1343.5px;top:858.3px" width="1" height="1"><path d="M1.6 -3.2L-1.6 0L1.6 3.2" fill="none" stroke="#444" stroke-width="1.300"/></svg>
<svg style="left:1656px;top:858.3px" width="1" height="1"><path d="M-1.6 -3.2L1.6 0L-1.6 3.2" fill="none" stroke="#444" stroke-width="1.300"/></svg>
<svg style="left:1303.5px;top:888.5px" width="14" height="13" viewBox="0 0 14 13"><path d="M1.500 4.500h3l1.500 1.500v6h-4.500z" fill="#eee" stroke="#444" stroke-width=".9"/><circle cx="7" cy="4.500" r="3.300" fill="#9be0e8" fill-opacity=".6" stroke="#222" stroke-width="1.100"/><path d="M9.300 7l4 4.800" stroke="#111" stroke-width="1.600"/></svg>
<svg style="left:1631.30px;top:92.90px" width="6.4" height="3.2" viewBox="0 0 10 5"><path d="M0 0h10l-5 5z" fill="#111"/></svg>
<svg style="left:1647px;top:89.500px" width="8" height="10" viewBox="0 0 8 10"><path d="M2.500 1h3.500v4h-3.500zM1 5.500h6M4 5.500v4" fill="none" stroke="#111" stroke-width="1.100"/><path d="M5.300 1v4" stroke="#111" stroke-width="1.300"/></svg>
<svg style="left:1663.300px;top:90.300px" width="8.200" height="8.200" viewBox="0 0 9 9"><path d="M1 1l7 7M8 1l-7 7" stroke="#000" stroke-width="1.900"/></svg>
<svg style="left:1631.30px;top:929.40px" width="6.4" height="3.2" viewBox="0 0 10 5"><path d="M0 0h10l-5 5z" fill="#111"/></svg>
<svg style="left:1647px;top:926px" width="8" height="10" viewBox="0 0 8 10"><path d="M2.500 1h3.500v4h-3.500zM1 5.500h6M4 5.500v4" fill="none" stroke="#111" stroke-width="1.100"/><path d="M5.300 1v4" stroke="#111" stroke-width="1.300"/></svg>
<svg style="left:1663.300px;top:926.800px" width="8.200" height="8.200" viewBox="0 0 9 9"><path d="M1 1l7 7M8 1l-7 7" stroke="#000" stroke-width="1.900"/></svg>
<svg style="left:1343.3px;top:108.300px" width="7" height="8" viewBox="0 0 8 9"><path d="M0.600 0.800l3.300 3.700v3.800M7.200 0.800l-3.300 3.700" fill="none" stroke="#3c3c3c" stroke-width="1.500"/></svg>
<svg style="left:1379.20px;top:112.45px" width="4.6" height="2.3" viewBox="0 0 10 5"><path d="M0 0h10l-5 5z" fill="#111"/></svg>
<svg style="left:1441.70px;top:112.45px" width="4.6" height="2.3" viewBox="0 0 10 5"><path d="M0 0h10l-5 5z" fill="#111"/></svg>
<svg style="left:1509.70px;top:112.45px" width="4.6" height="2.3" viewBox="0 0 10 5"><path d="M0 0h10l-5 5z" fill="#111"/></svg>
<svg style="left:1396px;top:107px" width="11" height="12" viewBox="0 0 11 12"><path d="M1 2v6l3.500-3z" fill="#1a1a8a"/><path d="M6.500 0.500l2 2-2 2-2-2zM8.500 4.500l2 2-2 2-2-2zM6.500 8l1.800 1.800-1.800 1.800-1.800-1.800z" fill="#18b0a0" stroke="#0a6a60" stroke-width=".5"/></svg>
<svg style="left:1452px;top:106.500px" width="12" height="13" viewBox="0 0 12 13"><path d="M1 6l2.200-5.200 2.200 5.200M1.800 4.300h2.800" fill="none" stroke="#2b2bb8" stroke-width="1"/><path d="M1.200 7.500h4l-4 4.500h4.200" fill="none" stroke="#b01818" stroke-width="1.100"/><path d="M9 1v10.500M7 9.300l2 2.500 2-2.500" fill="none" stroke="#333" stroke-width="1.100"/></svg>
<div style="left:1521px;top:107px;width:10.5px;height:10.5px;background:#f4f9ff;border:1px solid #4a80b8;"></div>
<svg style="left:1522.500px;top:108.300px" width="8" height="8" viewBox="0 0 8 8"><path d="M1 4l2 2.500 4-5.500" fill="none" stroke="#1a9a1a" stroke-width="1.400"/></svg>
<svg style="left:6px;top:1093.500px" width="10" height="10" viewBox="0 0 10 10"><rect x="0.500" y="0.500" width="9" height="9" fill="#fff" stroke="#222"/><rect x="0.500" y="0.500" width="9" height="2.300" fill="#1a1a8a"/><path d="M2 5h6M2 7h5" stroke="#777" stroke-width=".9"/></svg>
<svg style="left:580px;top:1108.500px" width="12" height="10" viewBox="0 0 12 10"><path d="M3 9c-3 0-3.300-3.800-.6-4.200c0-4 5.600-4.500 6.400-1.200c3-.2 3.300 5.400 0 5.400z" fill="#fff" stroke="#d22" stroke-width="1"/><path d="M4.500 4.800l2.600 2.600M7.100 4.800l-2.600 2.600" stroke="#d22" stroke-width=".9"/></svg>
<svg style="left:826px;top:1110.800px" width="9" height="9" viewBox="0 0 9 9"><circle cx="4.500" cy="4.500" r="4" fill="#e01818" stroke="#8a0a0a" stroke-width=".7"/><path d="M3 3l3 3M6 3l-3 3" stroke="#fff" stroke-width="1.200"/></svg>
<svg style="left:849.800px;top:1110.800px" width="9" height="9" viewBox="0 0 9 9"><circle cx="4.500" cy="4.500" r="4" fill="#f4e400" stroke="#8a7a00" stroke-width=".7"/><path d="M4.500 2v3.200M4.500 6.200v1" stroke="#111" stroke-width="1.200"/></svg>
<svg style="left:930.500px;top:1110px" width="13" height="11" viewBox="0 0 13 11"><path d="M1 6l3.500 4 8-9" fill="none" stroke="#1a9a1a" stroke-width="1.900"/></svg>
<svg style="left:971px;top:1110px" width="13" height="11" viewBox="0 0 13 11"><path d="M1.500 5v-2.500c0-2 4-2 4 0v1" fill="none" stroke="#111" stroke-width="1.300"/><rect x="4.500" y="4.500" width="7" height="6" fill="#fff" stroke="#111" stroke-width="1.200"/><rect x="7.500" y="7" width="4" height="3.500" fill="#111"/></svg>
<svg style="left:1647.500px;top:1108.500px" width="11" height="13" viewBox="0 0 11 13"><path d="M5.500 0.800c1.800 1 3.400 1.300 4.800 1.200c.3 5-1.600 8.600-4.800 10.200c-3.200-1.600-5.100-5.200-4.800-10.200c1.400.1 3-.2 4.800-1.200z" fill="#9aa0a8" stroke="#444" stroke-width="1"/><path d="M5.500 1.600v5h-4.300c-.1-1.300-.1-2.500 0-3.800c1.500 0 2.900-.4 4.300-1.200z" fill="#f4dc3c"/><path d="M5.500 6.600h4.300c-.5 2.300-2 4-4.300 5.200z" fill="#f4dc3c"/></svg>
<svg style="left:1667px;top:1114.500px" width="9" height="8" viewBox="0 0 9 8"><path d="M6.500 0.500h1.600M4 3.200h1.600M6.500 3.200h1.600M1.500 6h1.600M4 6h1.600M6.500 6h1.600" stroke="#b8b8b8" stroke-width="1.300"/></svg>
<div style="left:0px;top:0px;width:1678px;height:1px;background:#4a5568;"></div>
<div style="left:0px;top:0px;width:1.3px;height:1125px;background:#2b3246;"></div>
<div style="left:1677px;top:0px;width:1px;height:1125px;background:#4a5568;"></div>
<div style="left:0px;top:1123px;width:1678px;height:2px;background:#222d46;"></div>
<div style="left:1px;top:1122.3px;width:1676px;height:0.8px;background:#fafafa;"></div>
<span class="t" style="left:24.00px;top:6.00px;font-size:10.5px;line-height:14px;transform-origin:0 50%;transform:scaleX(0.8899);">Application.project* - CODESYS</span>
<span class="t" style="left:13.00px;top:27.50px;font-size:10.5px;line-height:14px;letter-spacing:-0.085px;transform-origin:0 50%;transform:scaleX(0.8400);">File</span>
<span class="t" style="left:42.00px;top:27.50px;font-size:10.5px;line-height:14px;transform-origin:0 50%;transform:scaleX(0.9396);">Edit</span>
<span class="t" style="left:74.00px;top:27.50px;font-size:10.5px;line-height:14px;transform-origin:0 50%;transform:scaleX(0.8858);">View</span>
<span class="t" style="left:109.00px;top:27.50px;font-size:10.5px;line-height:14px;transform-origin:0 50%;transform:scaleX(0.9178);">Project</span>
<span class="t" style="left:154.00px;top:27.50px;font-size:10.5px;line-height:14px;transform-origin:0 50%;transform:scaleX(0.9418);">Build</span>
<span class="t" style="left:191.00px;top:27.50px;font-size:10.5px;line-height:14px;transform-origin:0 50%;transform:scaleX(0.9552);">Online</span>
<span class="t" style="left:235.00px;top:27.50px;font-size:10.5px;line-height:14px;transform-origin:0 50%;transform:scaleX(0.9046);">Debug</span>
<span class="t" style="left:278.00px;top:27.50px;font-size:10.5px;line-height:14px;transform-origin:0 50%;transform:scaleX(0.8974);">Tools</span>
<span class="t" style="left:315.00px;top:27.50px;font-size:10.5px;line-height:14px;transform-origin:0 50%;transform:scaleX(0.9636);">Window</span>
<span class="t" style="left:366.00px;top:27.50px;font-size:10.5px;line-height:14px;transform-origin:0 50%;transform:scaleX(0.9255);">Help</span>
<span class="t" style="left:401.00px;top:27.50px;font-size:10.5px;line-height:14px;transform-origin:0 50%;transform:scaleX(0.9019);">Visualization</span>
<span class="t" style="left:1650.00px;top:27.40px;font-size:9.6px;line-height:14px;font-weight:700;color:#e0001a;transform-origin:0 50%;transform:scaleX(1.0307);">64</span>
<span class="t" style="left:479.00px;top:47.40px;font-size:10.5px;line-height:14px;transform-origin:0 50%;transform:scaleX(0.9079);">Application [CPU: PLC Logic]</span>
<span class="t" style="left:41.00px;top:87.00px;font-size:9.6px;line-height:14px;transform-origin:0 50%;transform:scaleX(0.8833);">ProcessImage01</span>
<span class="t" style="left:155.00px;top:87.00px;font-size:9.6px;line-height:14px;letter-spacing:-0.323px;transform-origin:0 50%;transform:scaleX(0.8400);">PLC_PRG</span>
<span class="t" style="left:240.00px;top:87.00px;font-size:9.6px;line-height:14px;transform-origin:0 50%;transform:scaleX(0.9018);">Library Manager</span>
<span class="t" style="left:352.50px;top:87.00px;font-size:9.6px;line-height:14px;letter-spacing:-0.311px;transform-origin:0 50%;transform:scaleX(0.8400);">CPU</span>
<span class="t" style="left:411.50px;top:87.00px;font-size:9.6px;line-height:14px;font-weight:700;transform-origin:0 50%;transform:scaleX(1.0101);">ProcessImage02</span>
<span class="t" style="left:1272.30px;top:888.60px;font-size:9.6px;line-height:14px;letter-spacing:-0.134px;transform-origin:0 50%;transform:scaleX(0.8400);">100 %</span>
<span class="t" style="left:1340.60px;top:87.00px;font-size:9.6px;line-height:14px;transform-origin:0 50%;transform:scaleX(0.9123);">Properties</span>
<span class="t" style="left:1355.00px;top:106.20px;font-size:9.6px;line-height:14px;transform-origin:0 50%;transform:scaleX(0.8440);">Filter</span>
<span class="t" style="left:1408.70px;top:106.20px;font-size:9.6px;line-height:14px;transform-origin:0 50%;transform:scaleX(0.9143);">Sort by</span>
<span class="t" style="left:1466.00px;top:106.20px;font-size:9.6px;line-height:14px;transform-origin:0 50%;transform:scaleX(0.9046);">Sort order</span>
<span class="t" style="left:1534.00px;top:106.20px;font-size:9.6px;line-height:14px;transform-origin:0 50%;transform:scaleX(0.9140);">Advanced</span>
<span class="t" style="left:1341.70px;top:125.10px;font-size:10.5px;line-height:14px;transform-origin:0 50%;transform:scaleX(0.9071);">Property</span>
<span class="t" style="left:1511.50px;top:125.10px;font-size:10.5px;line-height:14px;transform-origin:0 50%;transform:scaleX(0.8513);">Value</span>
<span class="t" style="left:1356.50px;top:143.60px;font-size:9.6px;line-height:14px;transform-origin:0 50%;transform:scaleX(0.8713);">Element name</span>
<span class="t" style="left:1510.80px;top:143.60px;font-size:9.6px;line-height:14px;transform-origin:0 50%;transform:scaleX(0.8703);">GenElemInst_35</span>
<span class="t" style="left:1356.50px;top:158.87px;font-size:9.6px;line-height:14px;transform-origin:0 50%;transform:scaleX(0.9155);">Type of element</span>
<span class="t" style="left:1510.80px;top:158.87px;font-size:9.6px;line-height:14px;transform-origin:0 50%;transform:scaleX(0.9024);clip-path:inset(0 7.8px 0 0);">Frame -&gt; JCmpVisuBasic.InputRealValue</span>
<span class="t" style="left:1356.50px;top:174.14px;font-size:9.6px;line-height:14px;transform-origin:0 50%;transform:scaleX(0.8653);">Clipping</span>
<span class="t" style="left:1356.50px;top:189.42px;font-size:9.6px;line-height:14px;transform-origin:0 50%;transform:scaleX(0.8889);">Show frame</span>
<span class="t" style="left:1510.80px;top:189.42px;font-size:9.6px;line-height:14px;transform-origin:0 50%;transform:scaleX(0.8795);">No frame</span>
<span class="t" style="left:1356.50px;top:204.69px;font-size:9.6px;line-height:14px;transform-origin:0 50%;transform:scaleX(0.8839);">Scaling type</span>
<span class="t" style="left:1510.80px;top:204.69px;font-size:9.6px;line-height:14px;transform-origin:0 50%;transform:scaleX(0.8890);">Anisotropic</span>
<span class="t" style="left:1356.50px;top:219.96px;font-size:9.6px;line-height:14px;transform-origin:0 50%;transform:scaleX(0.9142);">Deactivate the background drawing</span>
<span class="t" style="left:1356.50px;top:235.23px;font-size:9.6px;line-height:14px;transform-origin:0 50%;transform:scaleX(0.8989);">References</span>
<span class="t" style="left:1370.30px;top:250.50px;font-size:9.6px;line-height:14px;transform-origin:0 50%;transform:scaleX(0.9289);">JCmpVisuBasic.InputRealValue</span>
<span class="t" style="left:1510.80px;top:250.50px;font-size:9.6px;line-height:14px;">0</span>
<span class="t" style="left:1388.60px;top:265.78px;font-size:9.6px;line-height:14px;transform-origin:0 50%;transform:scaleX(0.8953);">rValue</span>
<span class="t" style="left:1510.80px;top:265.78px;font-size:9.6px;line-height:14px;transform-origin:0 50%;transform:scaleX(0.8726);">PLC_PRG.rTemperature</span>
<span class="t" style="left:1388.60px;top:281.05px;font-size:9.6px;line-height:14px;transform-origin:0 50%;transform:scaleX(0.8947);">rMaxValue</span>
<span class="t" style="left:1510.80px;top:281.05px;font-size:9.6px;line-height:14px;transform-origin:0 50%;transform:scaleX(0.8554);">100</span>
<span class="t" style="left:1388.60px;top:296.32px;font-size:9.6px;line-height:14px;transform-origin:0 50%;transform:scaleX(0.8686);">rMinValue</span>
<span class="t" style="left:1510.80px;top:296.32px;font-size:9.6px;line-height:14px;">0</span>
<span class="t" style="left:1388.60px;top:311.59px;font-size:9.6px;line-height:14px;transform-origin:0 50%;transform:scaleX(0.8949);">wsTitle</span>
<span class="t" style="left:1510.80px;top:311.59px;font-size:9.6px;line-height:14px;transform-origin:0 50%;transform:scaleX(0.8850);">"Temp"</span>
<span class="t" style="left:1388.60px;top:326.86px;font-size:9.6px;line-height:14px;transform-origin:0 50%;transform:scaleX(0.8959);">wsUnit</span>
<span class="t" style="left:1510.80px;top:326.86px;font-size:9.6px;line-height:14px;transform-origin:0 50%;transform:scaleX(0.9390);">"ºF"</span>
<span class="t" style="left:1388.60px;top:342.14px;font-size:9.6px;line-height:14px;letter-spacing:-0.120px;transform-origin:0 50%;transform:scaleX(0.8400);">iComma</span>
<span class="t" style="left:1510.80px;top:342.14px;font-size:9.6px;line-height:14px;">1</span>
<span class="t" style="left:1388.60px;top:357.41px;font-size:9.6px;line-height:14px;transform-origin:0 50%;transform:scaleX(0.9251);">dwTextAlignment</span>
<span class="t" style="left:1510.80px;top:357.41px;font-size:9.6px;line-height:14px;">5</span>
<span class="t" style="left:1354.70px;top:371.83px;font-size:9.6px;line-height:14px;transform-origin:0 50%;transform:scaleX(0.9461);">Position</span>
<span class="t" style="left:1372.50px;top:387.95px;font-size:9.6px;line-height:14px;">X</span>
<span class="t" style="left:1510.80px;top:387.95px;font-size:9.6px;line-height:14px;transform-origin:0 50%;transform:scaleX(0.8866);">527</span>
<span class="t" style="left:1372.50px;top:403.22px;font-size:9.6px;line-height:14px;">Y</span>
<span class="t" style="left:1510.80px;top:403.22px;font-size:9.6px;line-height:14px;transform-origin:0 50%;transform:scaleX(0.8866);">400</span>
<span class="t" style="left:1372.50px;top:418.50px;font-size:9.6px;line-height:14px;transform-origin:0 50%;transform:scaleX(0.9172);">Width</span>
<span class="t" style="left:1510.80px;top:418.50px;font-size:9.6px;line-height:14px;transform-origin:0 50%;transform:scaleX(0.8866);">150</span>
<span class="t" style="left:1372.50px;top:433.77px;font-size:9.6px;line-height:14px;transform-origin:0 50%;transform:scaleX(0.9194);">Height</span>
<span class="t" style="left:1510.80px;top:433.77px;font-size:9.6px;line-height:14px;transform-origin:0 50%;transform:scaleX(0.8621);">30</span>
<span class="t" style="left:1354.70px;top:448.19px;font-size:9.6px;line-height:14px;transform-origin:0 50%;transform:scaleX(0.9307);">Center</span>
<span class="t" style="left:1354.70px;top:463.46px;font-size:9.6px;line-height:14px;transform-origin:0 50%;transform:scaleX(0.9303);">Colors</span>
<span class="t" style="left:1354.70px;top:478.73px;font-size:9.6px;line-height:14px;transform-origin:0 50%;transform:scaleX(0.9333);">Appearance</span>
<span class="t" style="left:1354.70px;top:494.01px;font-size:9.6px;line-height:14px;transform-origin:0 50%;transform:scaleX(0.9506);">Texts</span>
<span class="t" style="left:1372.50px;top:510.13px;font-size:9.6px;line-height:14px;transform-origin:0 50%;transform:scaleX(1.0051);">Text</span>
<span class="t" style="left:1372.50px;top:525.40px;font-size:9.6px;line-height:14px;transform-origin:0 50%;transform:scaleX(0.9375);">Tooltip</span>
<span class="t" style="left:1354.70px;top:539.82px;font-size:9.6px;line-height:14px;transform-origin:0 50%;transform:scaleX(0.9901);">Text properties</span>
<span class="t" style="left:1372.50px;top:555.94px;font-size:9.6px;line-height:14px;transform-origin:0 50%;transform:scaleX(0.8975);">Horizontal alignment</span>
<span class="t" style="left:1510.80px;top:555.94px;font-size:9.6px;line-height:14px;transform-origin:0 50%;transform:scaleX(0.9045);">Centered</span>
<span class="t" style="left:1372.50px;top:571.22px;font-size:9.6px;line-height:14px;transform-origin:0 50%;transform:scaleX(0.8979);">Vertical alignment</span>
<span class="t" style="left:1510.80px;top:571.22px;font-size:9.6px;line-height:14px;transform-origin:0 50%;transform:scaleX(0.9045);">Centered</span>
<span class="t" style="left:1372.50px;top:586.49px;font-size:9.6px;line-height:14px;transform-origin:0 50%;transform:scaleX(0.9799);">Text format</span>
<span class="t" style="left:1510.80px;top:586.49px;font-size:9.6px;line-height:14px;transform-origin:0 50%;transform:scaleX(0.9110);">Default</span>
<span class="t" style="left:1372.50px;top:601.76px;font-size:9.6px;line-height:14px;transform-origin:0 50%;transform:scaleX(0.9217);">Font</span>
<span class="t" style="left:1510.80px;top:601.76px;font-size:9.6px;line-height:14px;transform-origin:0 50%;transform:scaleX(0.9110);">Default</span>
<span class="t" style="left:1372.50px;top:617.03px;font-size:9.6px;line-height:14px;transform-origin:0 50%;transform:scaleX(0.9022);">Font color</span>
<span class="t" style="left:1543.00px;top:617.03px;font-size:9.6px;line-height:14px;transform-origin:0 50%;transform:scaleX(0.9625);">Fontcolor</span>
<span class="t" style="left:1388.60px;top:632.30px;font-size:9.6px;line-height:14px;transform-origin:0 50%;transform:scaleX(0.9106);">Transparency</span>
<span class="t" style="left:1510.80px;top:632.30px;font-size:9.6px;line-height:14px;transform-origin:0 50%;transform:scaleX(0.8554);">255</span>
<span class="t" style="left:1354.70px;top:646.73px;font-size:9.6px;line-height:14px;transform-origin:0 50%;transform:scaleX(0.9588);">Absolute movement</span>
<span class="t" style="left:1354.70px;top:662.00px;font-size:9.6px;line-height:14px;transform-origin:0 50%;transform:scaleX(0.9473);">Relative movement</span>
<span class="t" style="left:1354.70px;top:677.27px;font-size:9.6px;line-height:14px;transform-origin:0 50%;transform:scaleX(0.9598);">Text variables</span>
<span class="t" style="left:1372.50px;top:693.39px;font-size:9.6px;line-height:14px;transform-origin:0 50%;transform:scaleX(0.9358);">Text variable</span>
<span class="t" style="left:1372.50px;top:708.66px;font-size:9.6px;line-height:14px;transform-origin:0 50%;transform:scaleX(0.9141);">Tooltip variable</span>
<span class="t" style="left:1354.70px;top:723.09px;font-size:9.6px;line-height:14px;transform-origin:0 50%;transform:scaleX(0.9344);">Dynamic texts</span>
<span class="t" style="left:1354.70px;top:738.36px;font-size:9.6px;line-height:14px;transform-origin:0 50%;transform:scaleX(0.9491);">Font variables</span>
<span class="t" style="left:1354.70px;top:753.63px;font-size:9.6px;line-height:14px;transform-origin:0 50%;transform:scaleX(0.9297);">Color variables</span>
<span class="t" style="left:1354.70px;top:768.90px;font-size:9.6px;line-height:14px;transform-origin:0 50%;transform:scaleX(0.9563);">Appearancevariables</span>
<span class="t" style="left:1354.70px;top:784.17px;font-size:9.6px;line-height:14px;transform-origin:0 50%;transform:scaleX(0.9464);">Switch frame variable</span>
<span class="t" style="left:1354.70px;top:799.45px;font-size:9.6px;line-height:14px;transform-origin:0 50%;transform:scaleX(0.9375);">State variables</span>
<span class="t" style="left:1372.50px;top:815.57px;font-size:9.6px;line-height:14px;transform-origin:0 50%;transform:scaleX(0.9085);">Invisible</span>
<span class="t" style="left:1372.50px;top:830.84px;font-size:9.6px;line-height:14px;transform-origin:0 50%;transform:scaleX(0.9172);">Deactivate inputs</span>
<span class="t" style="left:1354.70px;top:845.26px;font-size:9.6px;line-height:14px;transform-origin:0 50%;transform:scaleX(0.9917);clip-path:inset(0 0 7.3px 0);">Input configuration</span>
<span class="t" style="left:1571.60px;top:233.70px;font-size:9.6px;line-height:14px;transform-origin:0 50%;transform:scaleX(0.9353);">Configure...</span>
<span class="t" style="left:1340.60px;top:871.00px;font-size:9.8px;line-height:14px;transform-origin:0 50%;transform:scaleX(0.9427);">This property contains the name of the instance that will represent the selected</span>
<span class="t" style="left:1340.60px;top:881.80px;font-size:9.8px;line-height:14px;transform-origin:0 50%;transform:scaleX(0.9411);">visual element in the visualization.</span>
<span class="t" style="left:5.50px;top:923.50px;font-size:9.6px;line-height:14px;transform-origin:0 50%;transform:scaleX(0.9184);">Watch 1</span>
<span class="t" style="left:6.50px;top:942.70px;font-size:10.5px;line-height:14px;transform-origin:0 50%;transform:scaleX(0.8565);">Expression</span>
<span class="t" style="left:865.00px;top:942.70px;font-size:10.5px;line-height:14px;transform-origin:0 50%;transform:scaleX(0.9479);">Application</span>
<span class="t" style="left:961.70px;top:942.70px;font-size:10.5px;line-height:14px;letter-spacing:-0.128px;transform-origin:0 50%;transform:scaleX(0.8400);">Type</span>
<span class="t" style="left:1041.00px;top:942.70px;font-size:10.5px;line-height:14px;transform-origin:0 50%;transform:scaleX(0.8820);">Value</span>
<span class="t" style="left:1138.00px;top:942.70px;font-size:10.5px;line-height:14px;transform-origin:0 50%;transform:scaleX(0.8804);">Prepared value</span>
<span class="t" style="left:1219.00px;top:942.70px;font-size:10.5px;line-height:14px;transform-origin:0 50%;transform:scaleX(0.9260);">Execution point</span>
<span class="t" style="left:1412.50px;top:942.70px;font-size:10.5px;line-height:14px;transform-origin:0 50%;transform:scaleX(0.8694);">Address</span>
<span class="t" style="left:1461.00px;top:942.70px;font-size:10.5px;line-height:14px;transform-origin:0 50%;transform:scaleX(0.9327);">Comm...</span>
<span class="t" style="left:37.00px;top:960.00px;font-size:9.4px;line-height:14px;transform-origin:0 50%;transform:scaleX(0.9710);">stStartButton.xButtonFeedback</span>
<span class="t" style="left:863.30px;top:960.30px;font-size:9.4px;line-height:14px;transform-origin:0 50%;transform:scaleX(0.8965);">CPU.Application</span>
<span class="t" style="left:1218.00px;top:960.30px;font-size:9.4px;line-height:14px;transform-origin:0 50%;transform:scaleX(0.8967);">Cyclic Monitoring</span>
<span class="t" style="left:23.00px;top:1091.70px;font-size:9.6px;line-height:14px;color:#6a6a6a;transform-origin:0 50%;transform:scaleX(0.9612);">Messages - Total 0 error(s), 0 warning(s), 53 message(s)</span>
<span class="t" style="left:626.00px;top:1108.80px;font-size:9.6px;line-height:14px;transform-origin:0 50%;transform:scaleX(0.9517);">Device user: Anonymous</span>
<span class="t" style="left:781.70px;top:1108.30px;font-size:9.6px;line-height:14px;transform-origin:0 50%;transform:scaleX(0.8917);">Last build:</span>
<span class="t" style="left:840.00px;top:1108.30px;font-size:9.6px;line-height:14px;">0</span>
<span class="t" style="left:863.00px;top:1108.30px;font-size:9.6px;line-height:14px;">0</span>
<span class="t" style="left:886.00px;top:1108.30px;font-size:9.6px;line-height:14px;transform-origin:0 50%;transform:scaleX(0.8542);">Precompile</span>
<span class="t" style="left:1019.00px;top:1109.00px;font-size:9.6px;line-height:14px;color:#1e5a1e;transform-origin:0 50%;transform:scaleX(0.8415);">RUN</span>
<span class="t" style="left:1130.50px;top:1109.00px;font-size:9.6px;line-height:14px;transform-origin:0 50%;transform:scaleX(0.9595);">Program loaded</span>
<span class="t" style="left:1315.50px;top:1109.00px;font-size:9.6px;line-height:14px;transform-origin:0 50%;transform:scaleX(0.9317);">Program unchanged</span>
<span class="t" style="left:1503.50px;top:1109.00px;font-size:9.6px;line-height:14px;transform-origin:0 50%;transform:scaleX(0.9800);">Project user: (nobody)</span>
</body></html>
